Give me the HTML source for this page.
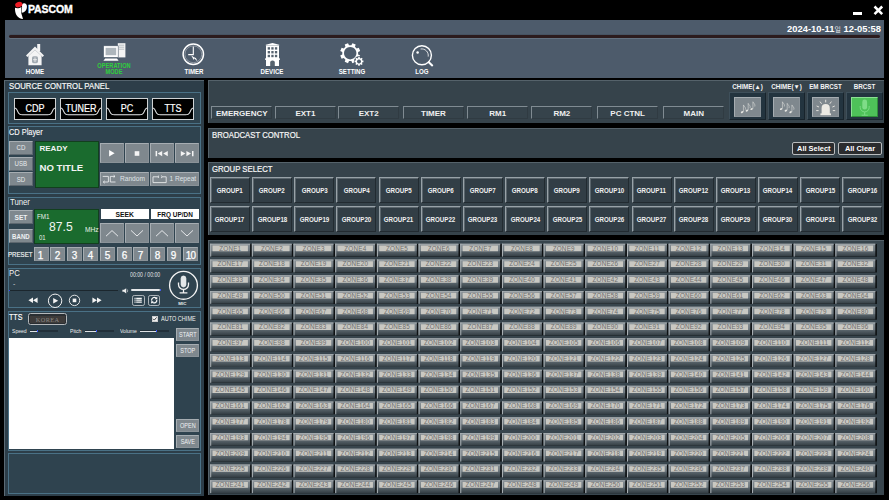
<!DOCTYPE html><html><head><meta charset="utf-8"><title>PASCOM</title><style>
html,body{margin:0;padding:0;background:#000;}
body{width:889px;height:500px;overflow:hidden;position:relative;font-family:"Liberation Sans","NanumGothic",sans-serif;color:#fff;}
div,svg{position:absolute;box-sizing:border-box;}
.b{font-weight:bold}
.sub{background:#2f434f;border:1px solid #4a7186;}
.rp{background:#36434b;border-top:1px solid #55626a;border-left:1px solid #55626a;}
.gb{background:#7f888e;border-top:1px solid #a6adb2;border-left:1px solid #a6adb2;border-right:1px solid #8a9298;border-bottom:1px solid #8a9298;color:#dfe3e6;text-align:center;}
.gb2{border-right-color:#5d676f;border-bottom-color:#5d676f;}
.tab{border-top:1px solid #808b92;border-left:1px solid #808b92;border-right:1px solid #303b42;border-bottom:1px solid #303b42;background:#36434b;}
.grp{background:#323e46;border-top:1px solid #98a2a8;border-left:1px solid #98a2a8;border-right:1px solid #222b31;border-bottom:1px solid #222b31;box-shadow:inset 1px 1px 0 rgba(152,162,168,0.4);color:#f0f0f0;font-weight:bold;font-size:6.5px;text-align:center;}
.zn{background:linear-gradient(#959ca1 0%,#7d868c 14%,#6c767d 48%,#525d64 56%,#303a40 100%);border-top:1px solid #a9afb3;border-left:1px solid #9ea5aa;border-right:1px solid #242c31;border-bottom:1px solid #262e33;}
.zn i{position:absolute;left:1.6px;right:1.8px;top:0.6px;height:5.9px;background:#cdcbc5;color:#8d8d8d;font-style:normal;font-size:6.5px;line-height:6.2px;text-align:center;}
.src{background:#000;border:1px solid #cfd2d4;}
</style></head><body>
<svg style="left:12px;top:0px" width="20" height="20" viewBox="0 0 20 20"><path d="M3 7.8 C4.6 8.6 7.4 8.4 9.5 7 C8.8 9.8 8.9 12.2 9.5 14 C10 15.6 10.6 17.2 11 18.9 C8.6 18.9 6 17.6 4.4 15 C3.2 13 2.9 10.4 3 7.8 Z" fill="#fff"/><path d="M9.9 4.4 C11 3.2 13 3 14 4 C15.6 5.6 15.2 9.4 12.8 11.6 C11.8 12.4 10.6 12.8 9.7 12.8 C9.4 10.8 9.5 9.2 10.1 7.4 Z" fill="#fff"/><ellipse cx="6.8" cy="4.6" rx="3.7" ry="2.6" fill="#ee1c25" transform="rotate(-17 6.8 4.6)"/></svg>
<div style="left:28px;top:3px;font-size:10.5px;line-height:12.5px;white-space:nowrap;font-weight:bold;letter-spacing:-0.1px;-webkit-text-stroke:0.35px #fff;">PASCOM</div>
<div style="left:853px;top:12px;width:9px;height:3px;background:#fff"></div>
<svg style="left:873px;top:5px" width="11" height="11" viewBox="0 0 11 11"><path d="M1.5 1.5 L9.2 9.2 M9.2 1.5 L1.5 9.2" stroke="#fff" stroke-width="2.5" fill="none"/></svg>
<div style="left:5px;top:20px;width:879px;height:58px;background:#4d5b6b;"></div>
<div style="left:9px;top:35.4px;width:871px;height:2.6px;background:#2b1b1d;border-radius:1.5px;box-shadow:0 0.8px 0 #6a7887,0 -0.5px 0 #414d5b;"></div>
<div style="left:780px;top:23px;font-size:9.5px;line-height:11.5px;white-space:nowrap;width:101px;text-align:right;transform:scaleX(0.985);transform-origin:100% 0;font-weight:bold;">2024-10-11<span style="font-size:7px;font-weight:normal">일</span> 12-05:58</div>
<svg style="left:24px;top:42px" width="22" height="25" viewBox="0 0 22 25"><path d="M13.2 2 h3 v7 h-3z" fill="#f4f4f4"/><path d="M11 4.6 L2 13.4 L3.4 14.9 L11 7.8 L18.6 14.9 L20 13.4 Z" fill="#f4f4f4"/><path d="M4.4 14 L11 7.8 L17.6 14 V23.2 H4.4 Z" fill="#f4f4f4"/><rect x="8" y="14.2" width="6" height="7" rx="1.6" fill="#a3abb2"/><path d="M11 15.4 v4.6 M9 17.7 h4" stroke="#f4f4f4" stroke-width="0.8"/></svg>
<div style="left:-5px;top:67.6px;font-size:6.8px;line-height:8.8px;white-space:nowrap;width:80px;text-align:center;transform:scaleX(0.9);transform-origin:50% 0;font-weight:bold;color:#fff;">HOME</div>
<svg style="left:102px;top:41px" width="25" height="21" viewBox="0 0 25 21"><rect x="15.8" y="2.2" width="7.6" height="14.2" fill="#f4f4f4"/><path d="M17 4.2 h5.2 M17 6.2 h5.2 M17 8.2 h5.2" stroke="#a9b1b8" stroke-width="0.8"/><rect x="1.6" y="4.8" width="14.6" height="11.6" fill="#fff" stroke="#4d5b6b" stroke-width="0.6"/><rect x="3.6" y="6.8" width="10.6" height="7.4" fill="#aeb6bc"/><path d="M3.2 17.4 H15 L16.6 19.8 H1.4 Z" fill="#fff"/></svg>
<div style="left:74.3px;top:62.3px;font-size:6.3px;line-height:8.3px;white-space:nowrap;width:80px;text-align:center;transform:scaleX(0.9);transform-origin:50% 0;font-weight:bold;color:#2fd03c;">OPERATION</div>
<div style="left:74.3px;top:68.1px;font-size:6.3px;line-height:8.3px;white-space:nowrap;width:80px;text-align:center;transform:scaleX(0.9);transform-origin:50% 0;font-weight:bold;color:#2fd03c;">MODE</div>
<svg style="left:181px;top:42px" width="25" height="25" viewBox="0 0 25 25"><circle cx="12.3" cy="12.3" r="10.2" fill="none" stroke="#fff" stroke-width="1.5"/><circle cx="12.3" cy="12.3" r="8.4" fill="none" stroke="#c8cdd2" stroke-width="0.5"/><path d="M12.3 4.6 V12.6 H7.2" fill="none" stroke="#fff" stroke-width="1.1"/><path d="M10.2 13.6 L16.6 19.4 L14.9 15.9 L12.8 15.2 Z" fill="#fff"/><path d="M10.2 13.6 L12.8 18 L13.4 15.8 Z" fill="#fff"/></svg>
<div style="left:153.6px;top:67.6px;font-size:6.8px;line-height:8.8px;white-space:nowrap;width:80px;text-align:center;transform:scaleX(0.9);transform-origin:50% 0;font-weight:bold;color:#fff;">TIMER</div>
<svg style="left:264px;top:41px" width="17" height="26" viewBox="0 0 17 26"><path d="M8.5 2 L15.2 3.8 V4.6 H1.8 V3.8 Z" fill="#fff"/><rect x="2" y="4.6" width="13" height="20.4" fill="#fff"/><g fill="#56636f"><rect x="3.7" y="6.2" width="2.3" height="2.4"/><rect x="7.3" y="6.2" width="2.3" height="2.4"/><rect x="10.9" y="6.2" width="2.3" height="2.4"/><rect x="3.7" y="10" width="2.3" height="2.4"/><rect x="7.3" y="10" width="2.3" height="2.4"/><rect x="10.9" y="10" width="2.3" height="2.4"/><rect x="3.7" y="13.8" width="2.3" height="2.4"/><rect x="7.3" y="13.8" width="2.3" height="2.4"/><rect x="10.9" y="13.8" width="2.3" height="2.4"/><path d="M6.2 25 V20.8 Q8.5 18.4 10.8 20.8 V25 Z"/></g><rect x="1" y="17.4" width="15" height="1.4" fill="#fff"/></svg>
<div style="left:232.39999999999998px;top:67.6px;font-size:6.8px;line-height:8.8px;white-space:nowrap;width:80px;text-align:center;transform:scaleX(0.9);transform-origin:50% 0;font-weight:bold;color:#fff;">DEVICE</div>
<svg style="left:340px;top:42.2px" width="26" height="27" viewBox="0 0 26 27"><path d="M18.11 12.39 L20.16 13.40 L18.80 16.69 L16.64 15.95 L14.95 17.64 L15.69 19.80 L12.40 21.16 L11.39 19.11 L9.01 19.11 L8.00 21.16 L4.71 19.80 L5.45 17.64 L3.76 15.95 L1.60 16.69 L0.24 13.40 L2.29 12.39 L2.29 10.01 L0.24 9.00 L1.60 5.71 L3.76 6.45 L5.45 4.76 L4.71 2.60 L8.00 1.24 L9.01 3.29 L11.39 3.29 L12.40 1.24 L15.69 2.60 L14.95 4.76 L16.64 6.45 L18.80 5.71 L20.16 9.00 L18.11 10.01 Z M10.2 5.0 a6.2 6.2 0 1 0 0.01 0 Z" fill="#fff" fill-rule="evenodd"/><circle cx="19.0" cy="19.4" r="5.1" fill="#4d5b6b"/><path d="M22.30 18.58 L23.43 18.62 L23.43 20.18 L22.30 20.22 L21.91 21.15 L22.69 21.98 L21.58 23.09 L20.75 22.31 L19.82 22.70 L19.78 23.83 L18.22 23.83 L18.18 22.70 L17.25 22.31 L16.42 23.09 L15.31 21.98 L16.09 21.15 L15.70 20.22 L14.57 20.18 L14.57 18.62 L15.70 18.58 L16.09 17.65 L15.31 16.82 L16.42 15.71 L17.25 16.49 L18.18 16.10 L18.22 14.97 L19.78 14.97 L19.82 16.10 L20.75 16.49 L21.58 15.71 L22.69 16.82 L21.91 17.65 Z M19.0 17.4 a2.0 2.0 0 1 0 0.01 0 Z" fill="#fff" fill-rule="evenodd"/></svg>
<div style="left:311.5px;top:67.6px;font-size:6.8px;line-height:8.8px;white-space:nowrap;width:80px;text-align:center;transform:scaleX(0.9);transform-origin:50% 0;font-weight:bold;color:#fff;">SETTING</div>
<svg style="left:410px;top:43.7px" width="26" height="25" viewBox="0 0 26 25"><circle cx="11.9" cy="11.3" r="9.5" fill="none" stroke="#fff" stroke-width="1.4"/><path d="M10.6 5 A6.6 6.6 0 0 1 18.2 12.6" fill="none" stroke="#fff" stroke-width="0.8"/><circle cx="7.6" cy="8.5" r="1.25" fill="#fff"/><path d="M18.8 18.2 L22.2 21.4" stroke="#fff" stroke-width="2.1" stroke-linecap="round"/></svg>
<div style="left:381.8px;top:67.6px;font-size:6.8px;line-height:8.8px;white-space:nowrap;width:80px;text-align:center;transform:scaleX(0.9);transform-origin:50% 0;font-weight:bold;color:#fff;">LOG</div>
<div style="left:4px;top:80px;width:199.5px;height:415.5px;background:#2d3e49;border-left:1px solid #5b6a74;border-top:1px solid #55646e;"></div>
<div style="left:9px;top:80.6px;font-size:8.6px;line-height:10.6px;white-space:nowrap;transform:scaleX(0.905);transform-origin:0 0;color:#f6f6f6;-webkit-text-stroke:0.2px #f6f6f6;">SOURCE CONTROL PANEL</div>
<div class="sub" style="left:8px;top:91.5px;width:193px;height:32px;"></div>
<div class="src" style="left:13.8px;top:98.2px;width:42px;height:21.6px;"><svg style="left:0;top:0" width="40" height="19.6" viewBox="0 0 40 19.6"><path d="M0 9 C1.5 9.5 2.2 11 2.8 12.6 C3.6 14.8 5 15.8 7.5 15.8 H32.5 C35 15.8 36.4 14.8 37.2 12.6 C37.8 11 38.5 9.5 40 9" fill="none" stroke="#e6e8ea" stroke-width="1.1"/></svg></div>
<div style="left:13.8px;top:102.8px;font-size:10px;line-height:12px;white-space:nowrap;width:42px;text-align:center;transform:scaleX(0.9);transform-origin:50% 0;color:#fff;-webkit-text-stroke:0.2px #fff;">CDP</div>
<div class="src" style="left:59.900000000000006px;top:98.2px;width:42px;height:21.6px;"><svg style="left:0;top:0" width="40" height="19.6" viewBox="0 0 40 19.6"><path d="M0 9 C1.5 9.5 2.2 11 2.8 12.6 C3.6 14.8 5 15.8 7.5 15.8 H32.5 C35 15.8 36.4 14.8 37.2 12.6 C37.8 11 38.5 9.5 40 9" fill="none" stroke="#e6e8ea" stroke-width="1.1"/></svg></div>
<div style="left:59.900000000000006px;top:102.8px;font-size:10px;line-height:12px;white-space:nowrap;width:42px;text-align:center;transform:scaleX(0.9);transform-origin:50% 0;color:#fff;-webkit-text-stroke:0.2px #fff;">TUNER</div>
<div class="src" style="left:106.0px;top:98.2px;width:42px;height:21.6px;"><svg style="left:0;top:0" width="40" height="19.6" viewBox="0 0 40 19.6"><path d="M0 9 C1.5 9.5 2.2 11 2.8 12.6 C3.6 14.8 5 15.8 7.5 15.8 H32.5 C35 15.8 36.4 14.8 37.2 12.6 C37.8 11 38.5 9.5 40 9" fill="none" stroke="#e6e8ea" stroke-width="1.1"/></svg></div>
<div style="left:106.0px;top:102.8px;font-size:10px;line-height:12px;white-space:nowrap;width:42px;text-align:center;transform:scaleX(0.9);transform-origin:50% 0;color:#fff;-webkit-text-stroke:0.2px #fff;">PC</div>
<div class="src" style="left:152.10000000000002px;top:98.2px;width:42px;height:21.6px;"><svg style="left:0;top:0" width="40" height="19.6" viewBox="0 0 40 19.6"><path d="M0 9 C1.5 9.5 2.2 11 2.8 12.6 C3.6 14.8 5 15.8 7.5 15.8 H32.5 C35 15.8 36.4 14.8 37.2 12.6 C37.8 11 38.5 9.5 40 9" fill="none" stroke="#e6e8ea" stroke-width="1.1"/></svg></div>
<div style="left:152.10000000000002px;top:102.8px;font-size:10px;line-height:12px;white-space:nowrap;width:42px;text-align:center;transform:scaleX(0.9);transform-origin:50% 0;color:#fff;-webkit-text-stroke:0.2px #fff;">TTS</div>
<div class="sub" style="left:8px;top:126px;width:193px;height:68px;"></div>
<div style="left:9.2px;top:126.6px;font-size:8.6px;line-height:10.6px;white-space:nowrap;transform:scaleX(0.86);transform-origin:0 0;color:#f6f6f6;-webkit-text-stroke:0.15px #f6f6f6;">CD Player</div>
<div class="gb gb2" style="left:9px;top:141.2px;width:23.8px;height:13.8px;"></div>
<div style="left:9px;top:144.39999999999998px;font-size:6.8px;line-height:8.8px;white-space:nowrap;width:23.8px;text-align:center;transform:scaleX(0.9);transform-origin:50% 0;color:#e8ebed;">CD</div>
<div class="gb gb2" style="left:9px;top:156.79999999999998px;width:23.8px;height:13.8px;"></div>
<div style="left:9px;top:159.99999999999997px;font-size:6.8px;line-height:8.8px;white-space:nowrap;width:23.8px;text-align:center;transform:scaleX(0.9);transform-origin:50% 0;color:#e8ebed;">USB</div>
<div class="gb gb2" style="left:9px;top:172.39999999999998px;width:23.8px;height:13.8px;"></div>
<div style="left:9px;top:175.59999999999997px;font-size:6.8px;line-height:8.8px;white-space:nowrap;width:23.8px;text-align:center;transform:scaleX(0.9);transform-origin:50% 0;color:#e8ebed;">SD</div>
<div style="left:35px;top:141px;width:64px;height:46.5px;background:#1a6b2e;border:1px solid #123f1e;"></div>
<div style="left:39.5px;top:143.8px;font-size:8px;line-height:10px;white-space:nowrap;font-weight:bold;color:#f4f4f4;">READY</div>
<div style="left:39.5px;top:161.5px;font-size:9.6px;line-height:11.6px;white-space:nowrap;font-weight:bold;color:#f4f4f4;">NO TITLE</div>
<div class="gb" style="left:100px;top:142.6px;width:23.8px;height:20.4px;"></div>
<div class="gb" style="left:125px;top:142.6px;width:23.8px;height:20.4px;"></div>
<div class="gb" style="left:150px;top:142.6px;width:23.8px;height:20.4px;"></div>
<div class="gb" style="left:175.2px;top:142.6px;width:23.8px;height:20.4px;"></div>
<svg style="left:100px;top:142.6px" width="24" height="20.4" viewBox="0 0 24 20.4"><path d="M9.1 7.1 L14.6 10.3 L9.1 13.5 Z" fill="#fff"/></svg>
<svg style="left:125px;top:142.6px" width="24" height="20.4" viewBox="0 0 24 20.4"><rect x="9.7" y="8.2" width="4.6" height="4.6" fill="#f4f4f4"/></svg>
<svg style="left:150px;top:142.6px" width="24" height="20.4" viewBox="0 0 24 20.4"><path d="M5.6 8 h1.5 v5.2 h-1.5z M12.2 8 v5.2 L7.6 10.6z M17.8 8 v5.2 L13.2 10.6z" fill="#f4f4f4"/></svg>
<svg style="left:175.2px;top:142.6px" width="24" height="20.4" viewBox="0 0 24 20.4"><path d="M17 8 h1.5 v5.2 h-1.5z M11.4 8 v5.2 L16 10.6z M5.8 8 v5.2 L10.4 10.6z" fill="#f4f4f4"/></svg>
<div class="gb" style="left:100px;top:172px;width:48.6px;height:14.2px;"></div>
<div class="gb" style="left:150px;top:172px;width:49px;height:14.2px;"></div>
<svg style="left:102px;top:174px" width="14" height="11" viewBox="0 0 14 11"><path d="M0.7 2.4 H6.4 V8 H1.3 M2.7 6.8 L1.3 8 L2.7 9.2 M13.5 8 H8.3 V2.4 H13 M11.6 1.2 L13 2.4 L11.6 3.6" fill="none" stroke="#eceef0" stroke-width="0.85"/></svg>
<div style="left:120px;top:175.4px;font-size:6.6px;line-height:8.6px;white-space:nowrap;color:#dfe3e6;">Random</div>
<svg style="left:152px;top:174px" width="15" height="11" viewBox="0 0 15 11"><path d="M6 2.8 H1 V8.6 H14.2 V2.8 H10.6 M9 1.6 L10.6 2.8 L9 4 M6.4 1.6 v2.4" fill="none" stroke="#eceef0" stroke-width="0.85"/></svg>
<div style="left:169.4px;top:175.4px;font-size:6.6px;line-height:8.6px;white-space:nowrap;color:#dfe3e6;">1 Repeat</div>
<div class="sub" style="left:8px;top:196.5px;width:193px;height:68.5px;"></div>
<div style="left:9.5px;top:197.2px;font-size:8.6px;line-height:10.6px;white-space:nowrap;transform:scaleX(0.9);transform-origin:0 0;color:#f2f2f2;">Tuner</div>
<div class="gb gb2" style="left:9px;top:210.2px;width:23.8px;height:14px;"></div>
<div style="left:9px;top:213.6px;font-size:6.6px;line-height:8.6px;white-space:nowrap;width:23.8px;text-align:center;font-weight:bold;color:#eef0f2;">SET</div>
<div class="gb gb2" style="left:9px;top:229.3px;width:23.8px;height:14px;"></div>
<div style="left:9px;top:232.7px;font-size:6.6px;line-height:8.6px;white-space:nowrap;width:23.8px;text-align:center;transform:scaleX(0.92);transform-origin:50% 0;font-weight:bold;color:#eef0f2;">BAND</div>
<div style="left:34.4px;top:209px;width:64.6px;height:35px;background:#1a6b2e;border:1px solid #123f1e;"></div>
<div style="left:37.2px;top:212.4px;font-size:7px;line-height:9px;white-space:nowrap;transform:scaleX(0.9);transform-origin:0 0;color:#e8f0e8;">FM1</div>
<div style="left:49.4px;top:219.6px;font-size:12.8px;line-height:14.8px;white-space:nowrap;transform:scaleX(0.95);transform-origin:0 0;color:#f2f6f2;">87.5</div>
<div style="left:85px;top:225px;font-size:7px;line-height:9px;white-space:nowrap;transform:scaleX(0.95);transform-origin:0 0;color:#e8f0e8;">MHz</div>
<div style="left:38.6px;top:232.6px;font-size:7px;line-height:9px;white-space:nowrap;transform:scaleX(0.85);transform-origin:0 0;color:#e8f0e8;">01</div>
<div style="left:100.7px;top:209.2px;width:48px;height:9.4px;background:#fff;"></div>
<div style="left:100.7px;top:211px;font-size:6.8px;line-height:8.8px;white-space:nowrap;width:48px;text-align:center;font-weight:bold;color:#111;">SEEK</div>
<div style="left:150.8px;top:209.2px;width:48.2px;height:9.4px;background:#fff;"></div>
<div style="left:150.8px;top:211px;font-size:6.8px;line-height:8.8px;white-space:nowrap;width:48.2px;text-align:center;transform:scaleX(0.95);transform-origin:50% 0;font-weight:bold;color:#111;">FRQ UP/DN</div>
<div class="gb" style="left:100px;top:223.2px;width:23.8px;height:20.2px;"></div>
<svg style="left:100px;top:223.2px" width="24" height="20.2" viewBox="0 0 24 20.2"><path d="M6 13.2 L12 7.6 L18 13.2" fill="none" stroke="#f0f2f4" stroke-width="0.9"/></svg>
<div class="gb" style="left:125px;top:223.2px;width:23.8px;height:20.2px;"></div>
<svg style="left:125px;top:223.2px" width="24" height="20.2" viewBox="0 0 24 20.2"><path d="M6 7.4 L12 13 L18 7.4" fill="none" stroke="#f0f2f4" stroke-width="0.9"/></svg>
<div class="gb" style="left:150px;top:223.2px;width:23.8px;height:20.2px;"></div>
<svg style="left:150px;top:223.2px" width="24" height="20.2" viewBox="0 0 24 20.2"><path d="M6 13.2 L12 7.6 L18 13.2" fill="none" stroke="#f0f2f4" stroke-width="0.9"/></svg>
<div class="gb" style="left:175.2px;top:223.2px;width:23.8px;height:20.2px;"></div>
<svg style="left:175.2px;top:223.2px" width="24" height="20.2" viewBox="0 0 24 20.2"><path d="M6 7.4 L12 13 L18 7.4" fill="none" stroke="#f0f2f4" stroke-width="0.9"/></svg>
<div style="left:7.8px;top:250.2px;font-size:7.4px;line-height:9.4px;white-space:nowrap;transform:scaleX(0.83);transform-origin:0 0;color:#f6f6f6;-webkit-text-stroke:0.15px #f6f6f6;">PRESET</div>
<div class="gb" style="left:33.7px;top:247px;width:14.9px;height:14px;"></div>
<div style="left:33.400000000000006px;top:248.6px;font-size:10.5px;line-height:12.5px;white-space:nowrap;width:14.9px;text-align:center;transform:scaleX(0.95);transform-origin:50% 0;color:#fff;-webkit-text-stroke:0.25px #fff;">1</div>
<div class="gb" style="left:50.2px;top:247px;width:14.9px;height:14px;"></div>
<div style="left:49.900000000000006px;top:248.6px;font-size:10.5px;line-height:12.5px;white-space:nowrap;width:14.9px;text-align:center;transform:scaleX(0.95);transform-origin:50% 0;color:#fff;-webkit-text-stroke:0.25px #fff;">2</div>
<div class="gb" style="left:66.8px;top:247px;width:14.9px;height:14px;"></div>
<div style="left:66.5px;top:248.6px;font-size:10.5px;line-height:12.5px;white-space:nowrap;width:14.9px;text-align:center;transform:scaleX(0.95);transform-origin:50% 0;color:#fff;-webkit-text-stroke:0.25px #fff;">3</div>
<div class="gb" style="left:83.4px;top:247px;width:14.9px;height:14px;"></div>
<div style="left:83.10000000000001px;top:248.6px;font-size:10.5px;line-height:12.5px;white-space:nowrap;width:14.9px;text-align:center;transform:scaleX(0.95);transform-origin:50% 0;color:#fff;-webkit-text-stroke:0.25px #fff;">4</div>
<div class="gb" style="left:100.2px;top:247px;width:14.9px;height:14px;"></div>
<div style="left:99.9px;top:248.6px;font-size:10.5px;line-height:12.5px;white-space:nowrap;width:14.9px;text-align:center;transform:scaleX(0.95);transform-origin:50% 0;color:#fff;-webkit-text-stroke:0.25px #fff;">5</div>
<div class="gb" style="left:116.9px;top:247px;width:14.9px;height:14px;"></div>
<div style="left:116.60000000000001px;top:248.6px;font-size:10.5px;line-height:12.5px;white-space:nowrap;width:14.9px;text-align:center;transform:scaleX(0.95);transform-origin:50% 0;color:#fff;-webkit-text-stroke:0.25px #fff;">6</div>
<div class="gb" style="left:133.3px;top:247px;width:14.9px;height:14px;"></div>
<div style="left:133.0px;top:248.6px;font-size:10.5px;line-height:12.5px;white-space:nowrap;width:14.9px;text-align:center;transform:scaleX(0.95);transform-origin:50% 0;color:#fff;-webkit-text-stroke:0.25px #fff;">7</div>
<div class="gb" style="left:150px;top:247px;width:14.9px;height:14px;"></div>
<div style="left:149.7px;top:248.6px;font-size:10.5px;line-height:12.5px;white-space:nowrap;width:14.9px;text-align:center;transform:scaleX(0.95);transform-origin:50% 0;color:#fff;-webkit-text-stroke:0.25px #fff;">8</div>
<div class="gb" style="left:166.6px;top:247px;width:14.9px;height:14px;"></div>
<div style="left:166.29999999999998px;top:248.6px;font-size:10.5px;line-height:12.5px;white-space:nowrap;width:14.9px;text-align:center;transform:scaleX(0.95);transform-origin:50% 0;color:#fff;-webkit-text-stroke:0.25px #fff;">9</div>
<div class="gb" style="left:183.2px;top:247px;width:14.9px;height:14px;"></div>
<div style="left:182.89999999999998px;top:248.6px;font-size:10.5px;line-height:12.5px;white-space:nowrap;width:14.9px;text-align:center;transform:scaleX(0.95);transform-origin:50% 0;color:#fff;-webkit-text-stroke:0.25px #fff;letter-spacing:-0.8px;">10</div>
<div class="sub" style="left:8px;top:268px;width:193px;height:40px;"></div>
<div style="left:9.3px;top:268.4px;font-size:8.6px;line-height:10.6px;white-space:nowrap;transform:scaleX(0.9);transform-origin:0 0;color:#f2f2f2;">PC</div>
<div style="left:13px;top:278.5px;font-size:7px;line-height:9px;white-space:nowrap;color:#d0d4d8;">-</div>
<div style="left:9px;top:289.8px;width:109.4px;height:1px;background:#1b262d;"></div>
<div style="left:9px;top:289.6px;width:1.4px;height:1.2px;background:#2a3cff;"></div>
<div style="left:129.5px;top:271px;font-size:6.4px;line-height:8.4px;white-space:nowrap;transform:scaleX(0.81);transform-origin:0 0;color:#e6e8ea;">00:00 / 00:00</div>
<svg style="left:28px;top:297px" width="10" height="7" viewBox="0 0 10 7"><path d="M5 0.6 V6 L0.4 3.3z M9.6 0.6 V6 L5 3.3z" fill="#f4f4f4"/></svg>
<svg style="left:91.5px;top:297px" width="10" height="7" viewBox="0 0 10 7"><path d="M0.4 0.6 V6 L5 3.3z M5 0.6 V6 L9.6 3.3z" fill="#f4f4f4"/></svg>
<svg style="left:47px;top:292.5px" width="16" height="16" viewBox="0 0 16 16"><circle cx="8.1" cy="7.8" r="6.7" fill="none" stroke="#f4f4f4" stroke-width="1"/><path d="M6.2 5 L11.2 7.8 L6.2 10.6z" fill="#f4f4f4"/></svg>
<svg style="left:67.5px;top:293.8px" width="13" height="13" viewBox="0 0 13 13"><circle cx="6.5" cy="6.4" r="5.2" fill="none" stroke="#f4f4f4" stroke-width="0.9"/><rect x="4.7" y="4.6" width="3.6" height="3.6" fill="#f4f4f4"/></svg>
<svg style="left:121.5px;top:287.5px" width="8" height="6" viewBox="0 0 8 6"><path d="M0.4 1.8 H2 L4.2 0.2 V5.4 L2 3.8 H0.4z" fill="#f0f0f0"/><path d="M5.2 1.4 Q6.2 2.8 5.2 4.2" stroke="#f0f0f0" stroke-width="0.6" fill="none"/></svg>
<div style="left:130.7px;top:289.3px;width:29.8px;height:1.7px;background:#e6e8ea;border-radius:1px;"></div>
<div style="left:159.7px;top:289.3px;width:0.8px;height:1.7px;background:#4a60e8;"></div>
<div style="left:132.2px;top:295.2px;width:12.4px;height:10.4px;border:1px solid #aeb5ba;border-radius:2.2px;"></div>
<svg style="left:132.2px;top:295.2px" width="12.4" height="10.4" viewBox="0 0 12.4 10.4"><path d="M4.2 3.3 H9.8 M4.2 5.2 H9.8 M4.2 7.1 H9.8" stroke="#f8f8f8" stroke-width="1.25"/><path d="M2.5 3.3 h1.1 M2.5 5.2 h1.1 M2.5 7.1 h1.1" stroke="#f8f8f8" stroke-width="1.25"/></svg>
<div style="left:147.5px;top:295.2px;width:12.4px;height:10.4px;border:1px solid #aeb5ba;border-radius:2.2px;"></div>
<svg style="left:147.5px;top:295.2px" width="12.4" height="10.4" viewBox="0 0 12.4 10.4"><path d="M3.6 5.6 A2.7 2.7 0 0 1 8.2 3.3 M8.8 4.8 A2.7 2.7 0 0 1 4.2 7.1" fill="none" stroke="#f8f8f8" stroke-width="1.25"/><path d="M9.3 1.6 V4.2 H6.7z M3.1 8.8 V6.2 H5.7z" fill="#f8f8f8"/></svg>
<svg style="left:167.5px;top:269.7px" width="31" height="31" viewBox="0 0 31 31"><circle cx="15.5" cy="15.3" r="13.9" fill="none" stroke="#f4f4f4" stroke-width="1.35"/><rect x="13.1" y="6" width="4.8" height="11" rx="2.4" fill="#e4e8ea" stroke="#fff" stroke-width="0.7"/><path d="M10.5 12.4 V14.4 A5 5 0 0 0 20.5 14.4 V12.4" fill="none" stroke="#f4f4f4" stroke-width="1.3"/><path d="M15.5 19.4 V22.4 M11.6 22.8 H19.4" stroke="#f4f4f4" stroke-width="1.3"/></svg>
<div style="left:172.3px;top:301.2px;font-size:4.4px;line-height:6.4px;white-space:nowrap;width:20px;text-align:center;font-weight:bold;color:#eee;">MIC</div>
<div class="sub" style="left:8px;top:311px;width:193px;height:139.5px;"></div>
<div style="left:9.3px;top:312.4px;font-size:8.6px;line-height:10.6px;white-space:nowrap;transform:scaleX(0.83);transform-origin:0 0;color:#fff;-webkit-text-stroke:0.15px #fff;">TTS</div>
<div style="left:27.7px;top:313.2px;width:39.8px;height:11.6px;border:1px solid #b4b8bb;border-radius:2.5px;background:#2a2f33;"></div>
<div style="left:30.2px;top:316.2px;width:34.8px;height:6.4px;background:#3d3b3a;"></div>
<div style="left:27.7px;top:315.6px;font-size:6.3px;line-height:8.3px;white-space:nowrap;width:39.8px;text-align:center;color:#8c8a86;font-family:'Liberation Serif',serif;letter-spacing:0.35px;">KOREA</div>
<div style="left:152px;top:316.2px;width:5.6px;height:5.6px;background:#f2f2f2;border:0.5px solid #cfcfcf;"></div>
<svg style="left:152px;top:316.2px" width="5.6" height="5.6" viewBox="0 0 5.6 5.6"><path d="M1.1 2.8 L2.3 4.1 L4.6 1.4" stroke="#333" stroke-width="0.9" fill="none"/></svg>
<div style="left:160.6px;top:314.4px;font-size:7.4px;line-height:9.4px;white-space:nowrap;transform:scaleX(0.75);transform-origin:0 0;color:#f2f2f2;">AUTO CHIME</div>
<div style="left:12px;top:327.4px;font-size:6.2px;line-height:8.2px;white-space:nowrap;transform:scaleX(0.82);transform-origin:0 0;color:#eceeef;">Speed</div>
<div style="left:30px;top:330.4px;width:27.8px;height:1.6px;background:#22303a;"></div>
<div style="left:30px;top:330.5px;width:7px;height:1.5px;background:#dfe3e6;"></div>
<div style="left:36.6px;top:330.4px;width:1px;height:1.6px;background:#3a55ff;"></div>
<div style="left:70.2px;top:327.4px;font-size:6.2px;line-height:8.2px;white-space:nowrap;transform:scaleX(0.82);transform-origin:0 0;color:#eceeef;">Pitch</div>
<div style="left:85px;top:330.4px;width:29.4px;height:1.6px;background:#22303a;"></div>
<div style="left:85px;top:330.5px;width:11.6px;height:1.5px;background:#dfe3e6;"></div>
<div style="left:96.2px;top:330.4px;width:1px;height:1.6px;background:#3a55ff;"></div>
<div style="left:120.2px;top:327.4px;font-size:6.2px;line-height:8.2px;white-space:nowrap;transform:scaleX(0.82);transform-origin:0 0;color:#eceeef;">Volume</div>
<div style="left:140px;top:330.4px;width:29px;height:1.6px;background:#22303a;"></div>
<div style="left:140px;top:330.5px;width:16px;height:1.5px;background:#dfe3e6;"></div>
<div style="left:155.6px;top:330.4px;width:1px;height:1.6px;background:#3a55ff;"></div>
<div style="left:9px;top:337.6px;width:165px;height:111px;background:#fff;"></div>
<div class="gb" style="left:175.6px;top:327.5px;width:23.6px;height:13.5px;"></div>
<div style="left:175.6px;top:330.5px;font-size:6.5px;line-height:8.5px;white-space:nowrap;width:23.6px;text-align:center;transform:scaleX(0.85);transform-origin:50% 0;color:#eef0f2;">START</div>
<div class="gb" style="left:175.6px;top:343.6px;width:23.6px;height:13.5px;"></div>
<div style="left:175.6px;top:346.6px;font-size:6.5px;line-height:8.5px;white-space:nowrap;width:23.6px;text-align:center;transform:scaleX(0.85);transform-origin:50% 0;color:#eef0f2;">STOP</div>
<div class="gb" style="left:175.6px;top:418.6px;width:23.6px;height:13.5px;"></div>
<div style="left:175.6px;top:421.6px;font-size:6.5px;line-height:8.5px;white-space:nowrap;width:23.6px;text-align:center;transform:scaleX(0.85);transform-origin:50% 0;color:#eef0f2;">OPEN</div>
<div class="gb" style="left:175.6px;top:434.8px;width:23.6px;height:13.5px;"></div>
<div style="left:175.6px;top:437.8px;font-size:6.5px;line-height:8.5px;white-space:nowrap;width:23.6px;text-align:center;transform:scaleX(0.85);transform-origin:50% 0;color:#eef0f2;">SAVE</div>
<div class="sub" style="left:8px;top:453px;width:193px;height:41px;"></div>
<div class="rp" style="left:208px;top:80px;width:676px;height:43.2px;"></div>
<div class="tab" style="left:211.1px;top:106px;width:61.3px;height:12.8px;"></div>
<div style="left:211.1px;top:108.9px;font-size:8px;line-height:10px;white-space:nowrap;width:61.3px;text-align:center;font-weight:bold;color:#f0f0f0;">EMERGENCY</div>
<div class="tab" style="left:274.8px;top:106px;width:61.3px;height:12.8px;"></div>
<div style="left:274.8px;top:108.9px;font-size:8px;line-height:10px;white-space:nowrap;width:61.3px;text-align:center;font-weight:bold;color:#f0f0f0;">EXT1</div>
<div class="tab" style="left:338px;top:106px;width:61.3px;height:12.8px;"></div>
<div style="left:338px;top:108.9px;font-size:8px;line-height:10px;white-space:nowrap;width:61.3px;text-align:center;font-weight:bold;color:#f0f0f0;">EXT2</div>
<div class="tab" style="left:402.8px;top:106px;width:61.3px;height:12.8px;"></div>
<div style="left:402.8px;top:108.9px;font-size:8px;line-height:10px;white-space:nowrap;width:61.3px;text-align:center;font-weight:bold;color:#f0f0f0;">TIMER</div>
<div class="tab" style="left:467px;top:106px;width:61.3px;height:12.8px;"></div>
<div style="left:467px;top:108.9px;font-size:8px;line-height:10px;white-space:nowrap;width:61.3px;text-align:center;font-weight:bold;color:#f0f0f0;">RM1</div>
<div class="tab" style="left:531.2px;top:106px;width:61.3px;height:12.8px;"></div>
<div style="left:531.2px;top:108.9px;font-size:8px;line-height:10px;white-space:nowrap;width:61.3px;text-align:center;font-weight:bold;color:#f0f0f0;">RM2</div>
<div class="tab" style="left:597px;top:106px;width:61.3px;height:12.8px;"></div>
<div style="left:597px;top:108.9px;font-size:8px;line-height:10px;white-space:nowrap;width:61.3px;text-align:center;font-weight:bold;color:#f0f0f0;">PC CTNL</div>
<div class="tab" style="left:663.2px;top:106px;width:61.3px;height:12.8px;"></div>
<div style="left:663.2px;top:108.9px;font-size:8px;line-height:10px;white-space:nowrap;width:61.3px;text-align:center;font-weight:bold;color:#f0f0f0;">MAIN</div>
<div style="left:725.0px;top:83px;font-size:6.6px;line-height:8.6px;white-space:nowrap;width:45px;text-align:center;transform:scaleX(0.95);transform-origin:50% 0;font-weight:bold;color:#f4f4f4;">CHIME(&#9650;)</div>
<div style="left:729.0px;top:91.7px;width:37px;height:28.6px;background:#23343f;border:1px solid #3e4f5a;border-right-color:#18242c;border-bottom-color:#18242c;"></div>
<div class="gb" style="left:733.7px;top:97px;width:27.4px;height:20.4px;"></div>
<div style="left:764.1px;top:83px;font-size:6.6px;line-height:8.6px;white-space:nowrap;width:45px;text-align:center;transform:scaleX(0.95);transform-origin:50% 0;font-weight:bold;color:#f4f4f4;">CHIME(&#9660;)</div>
<div style="left:768.1px;top:91.7px;width:37px;height:28.6px;background:#23343f;border:1px solid #3e4f5a;border-right-color:#18242c;border-bottom-color:#18242c;"></div>
<div class="gb" style="left:772.8000000000001px;top:97px;width:27.4px;height:20.4px;"></div>
<div style="left:803.2px;top:83px;font-size:6.6px;line-height:8.6px;white-space:nowrap;width:45px;text-align:center;transform:scaleX(0.95);transform-origin:50% 0;font-weight:bold;color:#f4f4f4;">EM BRCST</div>
<div style="left:807.2px;top:91.7px;width:37px;height:28.6px;background:#23343f;border:1px solid #3e4f5a;border-right-color:#18242c;border-bottom-color:#18242c;"></div>
<div class="gb" style="left:811.9000000000001px;top:97px;width:27.4px;height:20.4px;"></div>
<div style="left:842.3px;top:83px;font-size:6.6px;line-height:8.6px;white-space:nowrap;width:45px;text-align:center;transform:scaleX(0.95);transform-origin:50% 0;font-weight:bold;color:#f4f4f4;">BRCST</div>
<div style="left:846.3px;top:91.7px;width:37px;height:28.6px;background:#23343f;border:1px solid #3e4f5a;border-right-color:#18242c;border-bottom-color:#18242c;"></div>
<div style="left:851.0px;top:97px;width:27.4px;height:20.4px;background:#4ec159;border-top:1px solid #8be093;border-left:1px solid #8be093;border-right:1px solid #2f8f3a;border-bottom:1px solid #2f8f3a;"></div>
<svg style="left:733.7px;top:96.6px" width="27.4" height="20.8" viewBox="0 0 27.4 20.8"><g transform="translate(1.6,1.6) scale(0.88)"><ellipse cx="7.4" cy="15.4" rx="1.5" ry="1.05" transform="rotate(-25 7.4 15.4)" fill="#e6e6e2"/><path d="M8.9 15.0 V7.200000000000001 C9.600000000000001 9.2 12.0 9.8 11.0 12.600000000000001" fill="none" stroke="#e6e6e2" stroke-width="0.6"/><ellipse cx="12.8" cy="13.6" rx="1.5" ry="1.05" transform="rotate(-25 12.8 13.6)" fill="#e6e6e2"/><path d="M14.3 13.2 V5.4 C15.0 7.3999999999999995 17.4 8.0 16.400000000000002 10.8" fill="none" stroke="#e6e6e2" stroke-width="0.6"/><ellipse cx="18.2" cy="11.8" rx="1.5" ry="1.05" transform="rotate(-25 18.2 11.8)" fill="#e6e6e2"/><path d="M19.7 11.4 V3.6000000000000014 C20.4 5.6000000000000005 22.799999999999997 6.200000000000001 21.8 9.0" fill="none" stroke="#e6e6e2" stroke-width="0.6"/></g></svg>
<svg style="left:772.8px;top:96.6px" width="27.4" height="20.8" viewBox="0 0 27.4 20.8"><g transform="translate(1.6,1.6) scale(0.88)"><ellipse cx="7.4" cy="11.8" rx="1.5" ry="1.05" transform="rotate(-25 7.4 11.8)" fill="#e6e6e2"/><path d="M8.9 11.4 V3.6000000000000014 C9.600000000000001 5.6000000000000005 12.0 6.200000000000001 11.0 9.0" fill="none" stroke="#e6e6e2" stroke-width="0.6"/><ellipse cx="12.8" cy="13.6" rx="1.5" ry="1.05" transform="rotate(-25 12.8 13.6)" fill="#e6e6e2"/><path d="M14.3 13.2 V5.4 C15.0 7.3999999999999995 17.4 8.0 16.400000000000002 10.8" fill="none" stroke="#e6e6e2" stroke-width="0.6"/><ellipse cx="18.2" cy="15.4" rx="1.5" ry="1.05" transform="rotate(-25 18.2 15.4)" fill="#e6e6e2"/><path d="M19.7 15.0 V7.200000000000001 C20.4 9.2 22.799999999999997 9.8 21.8 12.600000000000001" fill="none" stroke="#e6e6e2" stroke-width="0.6"/></g></svg>
<svg style="left:811.9px;top:96.9px" width="27.4" height="20.8" viewBox="0 0 27.4 20.8"><path d="M9.6 17 V11.2 A4.1 4.1 0 0 1 17.8 11.2 V17 Z" fill="#eceae4"/><rect x="8.4" y="16.4" width="10.6" height="1.8" fill="#eceae4"/><path d="M13.7 5.4 V2.8 M9.6 6.8 L8 4.6 M17.8 6.8 L19.4 4.6 M7 10 L4.6 9 M20.4 10 L22.8 9 M6.6 13.6 H4.2 M20.8 13.6 H23.2" stroke="#eceae4" stroke-width="0.9"/></svg>
<svg style="left:851px;top:96.9px" width="27.4" height="20.8" viewBox="0 0 27.4 20.8"><rect x="11.3" y="2.6" width="4.8" height="10" rx="2.4" fill="#7fdc88"/><path d="M9.2 9 V10.4 A4.5 4.5 0 0 0 18.2 10.4 V9" fill="none" stroke="#7fdc88" stroke-width="0.9"/><path d="M13.7 15 V18 M10.6 18.2 H16.8" stroke="#7fdc88" stroke-width="0.9"/></svg>
<div class="rp" style="left:208px;top:128px;width:676px;height:29.5px;"></div>
<div style="left:211.6px;top:130.4px;font-size:8.6px;line-height:10.6px;white-space:nowrap;transform:scaleX(0.9);transform-origin:0 0;color:#f6f6f6;-webkit-text-stroke:0.2px #f6f6f6;">BROADCAST CONTROL</div>
<div style="left:791.5px;top:141.6px;width:43.6px;height:13.8px;background:#2b2c2e;border:1px solid #b9bcbe;border-radius:2px;"></div>
<div style="left:791.5px;top:144px;font-size:8px;line-height:10px;white-space:nowrap;width:43.6px;text-align:center;transform:scaleX(0.93);transform-origin:50% 0;font-weight:bold;color:#fff;">All Select</div>
<div style="left:838.2px;top:141.6px;width:44px;height:13.8px;background:#2b2c2e;border:1px solid #b9bcbe;border-radius:2px;"></div>
<div style="left:838.2px;top:144px;font-size:8px;line-height:10px;white-space:nowrap;width:44px;text-align:center;transform:scaleX(0.93);transform-origin:50% 0;font-weight:bold;color:#fff;">All Clear</div>
<div class="rp" style="left:208px;top:162px;width:676px;height:73px;"></div>
<div style="left:211.8px;top:164.3px;font-size:8.6px;line-height:10.6px;white-space:nowrap;transform:scaleX(0.9);transform-origin:0 0;color:#f6f6f6;-webkit-text-stroke:0.2px #f6f6f6;">GROUP SELECT</div>
<div class="grp" style="left:210.00px;top:177.4px;width:40px;height:25.4px;line-height:26.6px;"><span style="display:inline-block;transform:scaleX(0.95)">GROUP1</span></div>
<div class="grp" style="left:252.15px;top:177.4px;width:40px;height:25.4px;line-height:26.6px;"><span style="display:inline-block;transform:scaleX(0.95)">GROUP2</span></div>
<div class="grp" style="left:294.30px;top:177.4px;width:40px;height:25.4px;line-height:26.6px;"><span style="display:inline-block;transform:scaleX(0.95)">GROUP3</span></div>
<div class="grp" style="left:336.45px;top:177.4px;width:40px;height:25.4px;line-height:26.6px;"><span style="display:inline-block;transform:scaleX(0.95)">GROUP4</span></div>
<div class="grp" style="left:378.60px;top:177.4px;width:40px;height:25.4px;line-height:26.6px;"><span style="display:inline-block;transform:scaleX(0.95)">GROUP5</span></div>
<div class="grp" style="left:420.75px;top:177.4px;width:40px;height:25.4px;line-height:26.6px;"><span style="display:inline-block;transform:scaleX(0.95)">GROUP6</span></div>
<div class="grp" style="left:462.90px;top:177.4px;width:40px;height:25.4px;line-height:26.6px;"><span style="display:inline-block;transform:scaleX(0.95)">GROUP7</span></div>
<div class="grp" style="left:505.05px;top:177.4px;width:40px;height:25.4px;line-height:26.6px;"><span style="display:inline-block;transform:scaleX(0.95)">GROUP8</span></div>
<div class="grp" style="left:547.20px;top:177.4px;width:40px;height:25.4px;line-height:26.6px;"><span style="display:inline-block;transform:scaleX(0.95)">GROUP9</span></div>
<div class="grp" style="left:589.35px;top:177.4px;width:40px;height:25.4px;line-height:26.6px;"><span style="display:inline-block;transform:scaleX(0.95)">GROUP10</span></div>
<div class="grp" style="left:631.50px;top:177.4px;width:40px;height:25.4px;line-height:26.6px;"><span style="display:inline-block;transform:scaleX(0.95)">GROUP11</span></div>
<div class="grp" style="left:673.65px;top:177.4px;width:40px;height:25.4px;line-height:26.6px;"><span style="display:inline-block;transform:scaleX(0.95)">GROUP12</span></div>
<div class="grp" style="left:715.80px;top:177.4px;width:40px;height:25.4px;line-height:26.6px;"><span style="display:inline-block;transform:scaleX(0.95)">GROUP13</span></div>
<div class="grp" style="left:757.95px;top:177.4px;width:40px;height:25.4px;line-height:26.6px;"><span style="display:inline-block;transform:scaleX(0.95)">GROUP14</span></div>
<div class="grp" style="left:800.10px;top:177.4px;width:40px;height:25.4px;line-height:26.6px;"><span style="display:inline-block;transform:scaleX(0.95)">GROUP15</span></div>
<div class="grp" style="left:842.25px;top:177.4px;width:40px;height:25.4px;line-height:26.6px;"><span style="display:inline-block;transform:scaleX(0.95)">GROUP16</span></div>
<div class="grp" style="left:210.00px;top:206.4px;width:40px;height:25.4px;line-height:26.6px;"><span style="display:inline-block;transform:scaleX(0.95)">GROUP17</span></div>
<div class="grp" style="left:252.15px;top:206.4px;width:40px;height:25.4px;line-height:26.6px;"><span style="display:inline-block;transform:scaleX(0.95)">GROUP18</span></div>
<div class="grp" style="left:294.30px;top:206.4px;width:40px;height:25.4px;line-height:26.6px;"><span style="display:inline-block;transform:scaleX(0.95)">GROUP19</span></div>
<div class="grp" style="left:336.45px;top:206.4px;width:40px;height:25.4px;line-height:26.6px;"><span style="display:inline-block;transform:scaleX(0.95)">GROUP20</span></div>
<div class="grp" style="left:378.60px;top:206.4px;width:40px;height:25.4px;line-height:26.6px;"><span style="display:inline-block;transform:scaleX(0.95)">GROUP21</span></div>
<div class="grp" style="left:420.75px;top:206.4px;width:40px;height:25.4px;line-height:26.6px;"><span style="display:inline-block;transform:scaleX(0.95)">GROUP22</span></div>
<div class="grp" style="left:462.90px;top:206.4px;width:40px;height:25.4px;line-height:26.6px;"><span style="display:inline-block;transform:scaleX(0.95)">GROUP23</span></div>
<div class="grp" style="left:505.05px;top:206.4px;width:40px;height:25.4px;line-height:26.6px;"><span style="display:inline-block;transform:scaleX(0.95)">GROUP24</span></div>
<div class="grp" style="left:547.20px;top:206.4px;width:40px;height:25.4px;line-height:26.6px;"><span style="display:inline-block;transform:scaleX(0.95)">GROUP25</span></div>
<div class="grp" style="left:589.35px;top:206.4px;width:40px;height:25.4px;line-height:26.6px;"><span style="display:inline-block;transform:scaleX(0.95)">GROUP26</span></div>
<div class="grp" style="left:631.50px;top:206.4px;width:40px;height:25.4px;line-height:26.6px;"><span style="display:inline-block;transform:scaleX(0.95)">GROUP27</span></div>
<div class="grp" style="left:673.65px;top:206.4px;width:40px;height:25.4px;line-height:26.6px;"><span style="display:inline-block;transform:scaleX(0.95)">GROUP28</span></div>
<div class="grp" style="left:715.80px;top:206.4px;width:40px;height:25.4px;line-height:26.6px;"><span style="display:inline-block;transform:scaleX(0.95)">GROUP29</span></div>
<div class="grp" style="left:757.95px;top:206.4px;width:40px;height:25.4px;line-height:26.6px;"><span style="display:inline-block;transform:scaleX(0.95)">GROUP30</span></div>
<div class="grp" style="left:800.10px;top:206.4px;width:40px;height:25.4px;line-height:26.6px;"><span style="display:inline-block;transform:scaleX(0.95)">GROUP31</span></div>
<div class="grp" style="left:842.25px;top:206.4px;width:40px;height:25.4px;line-height:26.6px;"><span style="display:inline-block;transform:scaleX(0.95)">GROUP32</span></div>
<div class="rp" style="left:208px;top:240px;width:676px;height:255px;background:#38454d;"></div>
<svg style="left:208px;top:240px" width="676" height="255" viewBox="208 240 676 255" font-family="Liberation Sans, sans-serif" font-size="6.3" letter-spacing="0.22" text-anchor="middle" fill="#6e6e6e"><defs><linearGradient id="zg" x1="0" y1="0" x2="0" y2="1"><stop offset="0" stop-color="#8f979c"/><stop offset="0.15" stop-color="#7f888e"/><stop offset="0.54" stop-color="#6e787f"/><stop offset="0.6" stop-color="#59646b"/><stop offset="1" stop-color="#333d43"/></linearGradient></defs><path fill="#0d1012" d="M211.20 244.05h40.5v12.6h-40.5zM252.88 244.05h40.5v12.6h-40.5zM294.56 244.05h40.5v12.6h-40.5zM336.24 244.05h40.5v12.6h-40.5zM377.92 244.05h40.5v12.6h-40.5zM419.60 244.05h40.5v12.6h-40.5zM461.28 244.05h40.5v12.6h-40.5zM502.96 244.05h40.5v12.6h-40.5zM544.64 244.05h40.5v12.6h-40.5zM586.32 244.05h40.5v12.6h-40.5zM628.00 244.05h40.5v12.6h-40.5zM669.68 244.05h40.5v12.6h-40.5zM711.36 244.05h40.5v12.6h-40.5zM753.04 244.05h40.5v12.6h-40.5zM794.72 244.05h40.5v12.6h-40.5zM836.40 244.05h40.5v12.6h-40.5zM211.20 259.81h40.5v12.6h-40.5zM252.88 259.81h40.5v12.6h-40.5zM294.56 259.81h40.5v12.6h-40.5zM336.24 259.81h40.5v12.6h-40.5zM377.92 259.81h40.5v12.6h-40.5zM419.60 259.81h40.5v12.6h-40.5zM461.28 259.81h40.5v12.6h-40.5zM502.96 259.81h40.5v12.6h-40.5zM544.64 259.81h40.5v12.6h-40.5zM586.32 259.81h40.5v12.6h-40.5zM628.00 259.81h40.5v12.6h-40.5zM669.68 259.81h40.5v12.6h-40.5zM711.36 259.81h40.5v12.6h-40.5zM753.04 259.81h40.5v12.6h-40.5zM794.72 259.81h40.5v12.6h-40.5zM836.40 259.81h40.5v12.6h-40.5zM211.20 275.58h40.5v12.6h-40.5zM252.88 275.58h40.5v12.6h-40.5zM294.56 275.58h40.5v12.6h-40.5zM336.24 275.58h40.5v12.6h-40.5zM377.92 275.58h40.5v12.6h-40.5zM419.60 275.58h40.5v12.6h-40.5zM461.28 275.58h40.5v12.6h-40.5zM502.96 275.58h40.5v12.6h-40.5zM544.64 275.58h40.5v12.6h-40.5zM586.32 275.58h40.5v12.6h-40.5zM628.00 275.58h40.5v12.6h-40.5zM669.68 275.58h40.5v12.6h-40.5zM711.36 275.58h40.5v12.6h-40.5zM753.04 275.58h40.5v12.6h-40.5zM794.72 275.58h40.5v12.6h-40.5zM836.40 275.58h40.5v12.6h-40.5zM211.20 291.35h40.5v12.6h-40.5zM252.88 291.35h40.5v12.6h-40.5zM294.56 291.35h40.5v12.6h-40.5zM336.24 291.35h40.5v12.6h-40.5zM377.92 291.35h40.5v12.6h-40.5zM419.60 291.35h40.5v12.6h-40.5zM461.28 291.35h40.5v12.6h-40.5zM502.96 291.35h40.5v12.6h-40.5zM544.64 291.35h40.5v12.6h-40.5zM586.32 291.35h40.5v12.6h-40.5zM628.00 291.35h40.5v12.6h-40.5zM669.68 291.35h40.5v12.6h-40.5zM711.36 291.35h40.5v12.6h-40.5zM753.04 291.35h40.5v12.6h-40.5zM794.72 291.35h40.5v12.6h-40.5zM836.40 291.35h40.5v12.6h-40.5zM211.20 307.11h40.5v12.6h-40.5zM252.88 307.11h40.5v12.6h-40.5zM294.56 307.11h40.5v12.6h-40.5zM336.24 307.11h40.5v12.6h-40.5zM377.92 307.11h40.5v12.6h-40.5zM419.60 307.11h40.5v12.6h-40.5zM461.28 307.11h40.5v12.6h-40.5zM502.96 307.11h40.5v12.6h-40.5zM544.64 307.11h40.5v12.6h-40.5zM586.32 307.11h40.5v12.6h-40.5zM628.00 307.11h40.5v12.6h-40.5zM669.68 307.11h40.5v12.6h-40.5zM711.36 307.11h40.5v12.6h-40.5zM753.04 307.11h40.5v12.6h-40.5zM794.72 307.11h40.5v12.6h-40.5zM836.40 307.11h40.5v12.6h-40.5zM211.20 322.88h40.5v12.6h-40.5zM252.88 322.88h40.5v12.6h-40.5zM294.56 322.88h40.5v12.6h-40.5zM336.24 322.88h40.5v12.6h-40.5zM377.92 322.88h40.5v12.6h-40.5zM419.60 322.88h40.5v12.6h-40.5zM461.28 322.88h40.5v12.6h-40.5zM502.96 322.88h40.5v12.6h-40.5zM544.64 322.88h40.5v12.6h-40.5zM586.32 322.88h40.5v12.6h-40.5zM628.00 322.88h40.5v12.6h-40.5zM669.68 322.88h40.5v12.6h-40.5zM711.36 322.88h40.5v12.6h-40.5zM753.04 322.88h40.5v12.6h-40.5zM794.72 322.88h40.5v12.6h-40.5zM836.40 322.88h40.5v12.6h-40.5zM211.20 338.64h40.5v12.6h-40.5zM252.88 338.64h40.5v12.6h-40.5zM294.56 338.64h40.5v12.6h-40.5zM336.24 338.64h40.5v12.6h-40.5zM377.92 338.64h40.5v12.6h-40.5zM419.60 338.64h40.5v12.6h-40.5zM461.28 338.64h40.5v12.6h-40.5zM502.96 338.64h40.5v12.6h-40.5zM544.64 338.64h40.5v12.6h-40.5zM586.32 338.64h40.5v12.6h-40.5zM628.00 338.64h40.5v12.6h-40.5zM669.68 338.64h40.5v12.6h-40.5zM711.36 338.64h40.5v12.6h-40.5zM753.04 338.64h40.5v12.6h-40.5zM794.72 338.64h40.5v12.6h-40.5zM836.40 338.64h40.5v12.6h-40.5zM211.20 354.41h40.5v12.6h-40.5zM252.88 354.41h40.5v12.6h-40.5zM294.56 354.41h40.5v12.6h-40.5zM336.24 354.41h40.5v12.6h-40.5zM377.92 354.41h40.5v12.6h-40.5zM419.60 354.41h40.5v12.6h-40.5zM461.28 354.41h40.5v12.6h-40.5zM502.96 354.41h40.5v12.6h-40.5zM544.64 354.41h40.5v12.6h-40.5zM586.32 354.41h40.5v12.6h-40.5zM628.00 354.41h40.5v12.6h-40.5zM669.68 354.41h40.5v12.6h-40.5zM711.36 354.41h40.5v12.6h-40.5zM753.04 354.41h40.5v12.6h-40.5zM794.72 354.41h40.5v12.6h-40.5zM836.40 354.41h40.5v12.6h-40.5zM211.20 370.17h40.5v12.6h-40.5zM252.88 370.17h40.5v12.6h-40.5zM294.56 370.17h40.5v12.6h-40.5zM336.24 370.17h40.5v12.6h-40.5zM377.92 370.17h40.5v12.6h-40.5zM419.60 370.17h40.5v12.6h-40.5zM461.28 370.17h40.5v12.6h-40.5zM502.96 370.17h40.5v12.6h-40.5zM544.64 370.17h40.5v12.6h-40.5zM586.32 370.17h40.5v12.6h-40.5zM628.00 370.17h40.5v12.6h-40.5zM669.68 370.17h40.5v12.6h-40.5zM711.36 370.17h40.5v12.6h-40.5zM753.04 370.17h40.5v12.6h-40.5zM794.72 370.17h40.5v12.6h-40.5zM836.40 370.17h40.5v12.6h-40.5zM211.20 385.94h40.5v12.6h-40.5zM252.88 385.94h40.5v12.6h-40.5zM294.56 385.94h40.5v12.6h-40.5zM336.24 385.94h40.5v12.6h-40.5zM377.92 385.94h40.5v12.6h-40.5zM419.60 385.94h40.5v12.6h-40.5zM461.28 385.94h40.5v12.6h-40.5zM502.96 385.94h40.5v12.6h-40.5zM544.64 385.94h40.5v12.6h-40.5zM586.32 385.94h40.5v12.6h-40.5zM628.00 385.94h40.5v12.6h-40.5zM669.68 385.94h40.5v12.6h-40.5zM711.36 385.94h40.5v12.6h-40.5zM753.04 385.94h40.5v12.6h-40.5zM794.72 385.94h40.5v12.6h-40.5zM836.40 385.94h40.5v12.6h-40.5zM211.20 401.70h40.5v12.6h-40.5zM252.88 401.70h40.5v12.6h-40.5zM294.56 401.70h40.5v12.6h-40.5zM336.24 401.70h40.5v12.6h-40.5zM377.92 401.70h40.5v12.6h-40.5zM419.60 401.70h40.5v12.6h-40.5zM461.28 401.70h40.5v12.6h-40.5zM502.96 401.70h40.5v12.6h-40.5zM544.64 401.70h40.5v12.6h-40.5zM586.32 401.70h40.5v12.6h-40.5zM628.00 401.70h40.5v12.6h-40.5zM669.68 401.70h40.5v12.6h-40.5zM711.36 401.70h40.5v12.6h-40.5zM753.04 401.70h40.5v12.6h-40.5zM794.72 401.70h40.5v12.6h-40.5zM836.40 401.70h40.5v12.6h-40.5zM211.20 417.47h40.5v12.6h-40.5zM252.88 417.47h40.5v12.6h-40.5zM294.56 417.47h40.5v12.6h-40.5zM336.24 417.47h40.5v12.6h-40.5zM377.92 417.47h40.5v12.6h-40.5zM419.60 417.47h40.5v12.6h-40.5zM461.28 417.47h40.5v12.6h-40.5zM502.96 417.47h40.5v12.6h-40.5zM544.64 417.47h40.5v12.6h-40.5zM586.32 417.47h40.5v12.6h-40.5zM628.00 417.47h40.5v12.6h-40.5zM669.68 417.47h40.5v12.6h-40.5zM711.36 417.47h40.5v12.6h-40.5zM753.04 417.47h40.5v12.6h-40.5zM794.72 417.47h40.5v12.6h-40.5zM836.40 417.47h40.5v12.6h-40.5zM211.20 433.23h40.5v12.6h-40.5zM252.88 433.23h40.5v12.6h-40.5zM294.56 433.23h40.5v12.6h-40.5zM336.24 433.23h40.5v12.6h-40.5zM377.92 433.23h40.5v12.6h-40.5zM419.60 433.23h40.5v12.6h-40.5zM461.28 433.23h40.5v12.6h-40.5zM502.96 433.23h40.5v12.6h-40.5zM544.64 433.23h40.5v12.6h-40.5zM586.32 433.23h40.5v12.6h-40.5zM628.00 433.23h40.5v12.6h-40.5zM669.68 433.23h40.5v12.6h-40.5zM711.36 433.23h40.5v12.6h-40.5zM753.04 433.23h40.5v12.6h-40.5zM794.72 433.23h40.5v12.6h-40.5zM836.40 433.23h40.5v12.6h-40.5zM211.20 449.00h40.5v12.6h-40.5zM252.88 449.00h40.5v12.6h-40.5zM294.56 449.00h40.5v12.6h-40.5zM336.24 449.00h40.5v12.6h-40.5zM377.92 449.00h40.5v12.6h-40.5zM419.60 449.00h40.5v12.6h-40.5zM461.28 449.00h40.5v12.6h-40.5zM502.96 449.00h40.5v12.6h-40.5zM544.64 449.00h40.5v12.6h-40.5zM586.32 449.00h40.5v12.6h-40.5zM628.00 449.00h40.5v12.6h-40.5zM669.68 449.00h40.5v12.6h-40.5zM711.36 449.00h40.5v12.6h-40.5zM753.04 449.00h40.5v12.6h-40.5zM794.72 449.00h40.5v12.6h-40.5zM836.40 449.00h40.5v12.6h-40.5zM211.20 464.76h40.5v12.6h-40.5zM252.88 464.76h40.5v12.6h-40.5zM294.56 464.76h40.5v12.6h-40.5zM336.24 464.76h40.5v12.6h-40.5zM377.92 464.76h40.5v12.6h-40.5zM419.60 464.76h40.5v12.6h-40.5zM461.28 464.76h40.5v12.6h-40.5zM502.96 464.76h40.5v12.6h-40.5zM544.64 464.76h40.5v12.6h-40.5zM586.32 464.76h40.5v12.6h-40.5zM628.00 464.76h40.5v12.6h-40.5zM669.68 464.76h40.5v12.6h-40.5zM711.36 464.76h40.5v12.6h-40.5zM753.04 464.76h40.5v12.6h-40.5zM794.72 464.76h40.5v12.6h-40.5zM836.40 464.76h40.5v12.6h-40.5zM211.20 480.53h40.5v12.6h-40.5zM252.88 480.53h40.5v12.6h-40.5zM294.56 480.53h40.5v12.6h-40.5zM336.24 480.53h40.5v12.6h-40.5zM377.92 480.53h40.5v12.6h-40.5zM419.60 480.53h40.5v12.6h-40.5zM461.28 480.53h40.5v12.6h-40.5zM502.96 480.53h40.5v12.6h-40.5zM544.64 480.53h40.5v12.6h-40.5zM586.32 480.53h40.5v12.6h-40.5zM628.00 480.53h40.5v12.6h-40.5zM669.68 480.53h40.5v12.6h-40.5zM711.36 480.53h40.5v12.6h-40.5zM753.04 480.53h40.5v12.6h-40.5zM794.72 480.53h40.5v12.6h-40.5zM836.40 480.53h40.5v12.6h-40.5z"/><path fill="url(#zg)" d="M210.20 243.75h39.9v12.8h-39.9zM251.88 243.75h39.9v12.8h-39.9zM293.56 243.75h39.9v12.8h-39.9zM335.24 243.75h39.9v12.8h-39.9zM376.92 243.75h39.9v12.8h-39.9zM418.60 243.75h39.9v12.8h-39.9zM460.28 243.75h39.9v12.8h-39.9zM501.96 243.75h39.9v12.8h-39.9zM543.64 243.75h39.9v12.8h-39.9zM585.32 243.75h39.9v12.8h-39.9zM627.00 243.75h39.9v12.8h-39.9zM668.68 243.75h39.9v12.8h-39.9zM710.36 243.75h39.9v12.8h-39.9zM752.04 243.75h39.9v12.8h-39.9zM793.72 243.75h39.9v12.8h-39.9zM835.40 243.75h39.9v12.8h-39.9z"/><path fill="url(#zg)" d="M210.20 259.51h39.9v12.8h-39.9zM251.88 259.51h39.9v12.8h-39.9zM293.56 259.51h39.9v12.8h-39.9zM335.24 259.51h39.9v12.8h-39.9zM376.92 259.51h39.9v12.8h-39.9zM418.60 259.51h39.9v12.8h-39.9zM460.28 259.51h39.9v12.8h-39.9zM501.96 259.51h39.9v12.8h-39.9zM543.64 259.51h39.9v12.8h-39.9zM585.32 259.51h39.9v12.8h-39.9zM627.00 259.51h39.9v12.8h-39.9zM668.68 259.51h39.9v12.8h-39.9zM710.36 259.51h39.9v12.8h-39.9zM752.04 259.51h39.9v12.8h-39.9zM793.72 259.51h39.9v12.8h-39.9zM835.40 259.51h39.9v12.8h-39.9z"/><path fill="url(#zg)" d="M210.20 275.28h39.9v12.8h-39.9zM251.88 275.28h39.9v12.8h-39.9zM293.56 275.28h39.9v12.8h-39.9zM335.24 275.28h39.9v12.8h-39.9zM376.92 275.28h39.9v12.8h-39.9zM418.60 275.28h39.9v12.8h-39.9zM460.28 275.28h39.9v12.8h-39.9zM501.96 275.28h39.9v12.8h-39.9zM543.64 275.28h39.9v12.8h-39.9zM585.32 275.28h39.9v12.8h-39.9zM627.00 275.28h39.9v12.8h-39.9zM668.68 275.28h39.9v12.8h-39.9zM710.36 275.28h39.9v12.8h-39.9zM752.04 275.28h39.9v12.8h-39.9zM793.72 275.28h39.9v12.8h-39.9zM835.40 275.28h39.9v12.8h-39.9z"/><path fill="url(#zg)" d="M210.20 291.05h39.9v12.8h-39.9zM251.88 291.05h39.9v12.8h-39.9zM293.56 291.05h39.9v12.8h-39.9zM335.24 291.05h39.9v12.8h-39.9zM376.92 291.05h39.9v12.8h-39.9zM418.60 291.05h39.9v12.8h-39.9zM460.28 291.05h39.9v12.8h-39.9zM501.96 291.05h39.9v12.8h-39.9zM543.64 291.05h39.9v12.8h-39.9zM585.32 291.05h39.9v12.8h-39.9zM627.00 291.05h39.9v12.8h-39.9zM668.68 291.05h39.9v12.8h-39.9zM710.36 291.05h39.9v12.8h-39.9zM752.04 291.05h39.9v12.8h-39.9zM793.72 291.05h39.9v12.8h-39.9zM835.40 291.05h39.9v12.8h-39.9z"/><path fill="url(#zg)" d="M210.20 306.81h39.9v12.8h-39.9zM251.88 306.81h39.9v12.8h-39.9zM293.56 306.81h39.9v12.8h-39.9zM335.24 306.81h39.9v12.8h-39.9zM376.92 306.81h39.9v12.8h-39.9zM418.60 306.81h39.9v12.8h-39.9zM460.28 306.81h39.9v12.8h-39.9zM501.96 306.81h39.9v12.8h-39.9zM543.64 306.81h39.9v12.8h-39.9zM585.32 306.81h39.9v12.8h-39.9zM627.00 306.81h39.9v12.8h-39.9zM668.68 306.81h39.9v12.8h-39.9zM710.36 306.81h39.9v12.8h-39.9zM752.04 306.81h39.9v12.8h-39.9zM793.72 306.81h39.9v12.8h-39.9zM835.40 306.81h39.9v12.8h-39.9z"/><path fill="url(#zg)" d="M210.20 322.57h39.9v12.8h-39.9zM251.88 322.57h39.9v12.8h-39.9zM293.56 322.57h39.9v12.8h-39.9zM335.24 322.57h39.9v12.8h-39.9zM376.92 322.57h39.9v12.8h-39.9zM418.60 322.57h39.9v12.8h-39.9zM460.28 322.57h39.9v12.8h-39.9zM501.96 322.57h39.9v12.8h-39.9zM543.64 322.57h39.9v12.8h-39.9zM585.32 322.57h39.9v12.8h-39.9zM627.00 322.57h39.9v12.8h-39.9zM668.68 322.57h39.9v12.8h-39.9zM710.36 322.57h39.9v12.8h-39.9zM752.04 322.57h39.9v12.8h-39.9zM793.72 322.57h39.9v12.8h-39.9zM835.40 322.57h39.9v12.8h-39.9z"/><path fill="url(#zg)" d="M210.20 338.34h39.9v12.8h-39.9zM251.88 338.34h39.9v12.8h-39.9zM293.56 338.34h39.9v12.8h-39.9zM335.24 338.34h39.9v12.8h-39.9zM376.92 338.34h39.9v12.8h-39.9zM418.60 338.34h39.9v12.8h-39.9zM460.28 338.34h39.9v12.8h-39.9zM501.96 338.34h39.9v12.8h-39.9zM543.64 338.34h39.9v12.8h-39.9zM585.32 338.34h39.9v12.8h-39.9zM627.00 338.34h39.9v12.8h-39.9zM668.68 338.34h39.9v12.8h-39.9zM710.36 338.34h39.9v12.8h-39.9zM752.04 338.34h39.9v12.8h-39.9zM793.72 338.34h39.9v12.8h-39.9zM835.40 338.34h39.9v12.8h-39.9z"/><path fill="url(#zg)" d="M210.20 354.11h39.9v12.8h-39.9zM251.88 354.11h39.9v12.8h-39.9zM293.56 354.11h39.9v12.8h-39.9zM335.24 354.11h39.9v12.8h-39.9zM376.92 354.11h39.9v12.8h-39.9zM418.60 354.11h39.9v12.8h-39.9zM460.28 354.11h39.9v12.8h-39.9zM501.96 354.11h39.9v12.8h-39.9zM543.64 354.11h39.9v12.8h-39.9zM585.32 354.11h39.9v12.8h-39.9zM627.00 354.11h39.9v12.8h-39.9zM668.68 354.11h39.9v12.8h-39.9zM710.36 354.11h39.9v12.8h-39.9zM752.04 354.11h39.9v12.8h-39.9zM793.72 354.11h39.9v12.8h-39.9zM835.40 354.11h39.9v12.8h-39.9z"/><path fill="url(#zg)" d="M210.20 369.87h39.9v12.8h-39.9zM251.88 369.87h39.9v12.8h-39.9zM293.56 369.87h39.9v12.8h-39.9zM335.24 369.87h39.9v12.8h-39.9zM376.92 369.87h39.9v12.8h-39.9zM418.60 369.87h39.9v12.8h-39.9zM460.28 369.87h39.9v12.8h-39.9zM501.96 369.87h39.9v12.8h-39.9zM543.64 369.87h39.9v12.8h-39.9zM585.32 369.87h39.9v12.8h-39.9zM627.00 369.87h39.9v12.8h-39.9zM668.68 369.87h39.9v12.8h-39.9zM710.36 369.87h39.9v12.8h-39.9zM752.04 369.87h39.9v12.8h-39.9zM793.72 369.87h39.9v12.8h-39.9zM835.40 369.87h39.9v12.8h-39.9z"/><path fill="url(#zg)" d="M210.20 385.63h39.9v12.8h-39.9zM251.88 385.63h39.9v12.8h-39.9zM293.56 385.63h39.9v12.8h-39.9zM335.24 385.63h39.9v12.8h-39.9zM376.92 385.63h39.9v12.8h-39.9zM418.60 385.63h39.9v12.8h-39.9zM460.28 385.63h39.9v12.8h-39.9zM501.96 385.63h39.9v12.8h-39.9zM543.64 385.63h39.9v12.8h-39.9zM585.32 385.63h39.9v12.8h-39.9zM627.00 385.63h39.9v12.8h-39.9zM668.68 385.63h39.9v12.8h-39.9zM710.36 385.63h39.9v12.8h-39.9zM752.04 385.63h39.9v12.8h-39.9zM793.72 385.63h39.9v12.8h-39.9zM835.40 385.63h39.9v12.8h-39.9z"/><path fill="url(#zg)" d="M210.20 401.40h39.9v12.8h-39.9zM251.88 401.40h39.9v12.8h-39.9zM293.56 401.40h39.9v12.8h-39.9zM335.24 401.40h39.9v12.8h-39.9zM376.92 401.40h39.9v12.8h-39.9zM418.60 401.40h39.9v12.8h-39.9zM460.28 401.40h39.9v12.8h-39.9zM501.96 401.40h39.9v12.8h-39.9zM543.64 401.40h39.9v12.8h-39.9zM585.32 401.40h39.9v12.8h-39.9zM627.00 401.40h39.9v12.8h-39.9zM668.68 401.40h39.9v12.8h-39.9zM710.36 401.40h39.9v12.8h-39.9zM752.04 401.40h39.9v12.8h-39.9zM793.72 401.40h39.9v12.8h-39.9zM835.40 401.40h39.9v12.8h-39.9z"/><path fill="url(#zg)" d="M210.20 417.17h39.9v12.8h-39.9zM251.88 417.17h39.9v12.8h-39.9zM293.56 417.17h39.9v12.8h-39.9zM335.24 417.17h39.9v12.8h-39.9zM376.92 417.17h39.9v12.8h-39.9zM418.60 417.17h39.9v12.8h-39.9zM460.28 417.17h39.9v12.8h-39.9zM501.96 417.17h39.9v12.8h-39.9zM543.64 417.17h39.9v12.8h-39.9zM585.32 417.17h39.9v12.8h-39.9zM627.00 417.17h39.9v12.8h-39.9zM668.68 417.17h39.9v12.8h-39.9zM710.36 417.17h39.9v12.8h-39.9zM752.04 417.17h39.9v12.8h-39.9zM793.72 417.17h39.9v12.8h-39.9zM835.40 417.17h39.9v12.8h-39.9z"/><path fill="url(#zg)" d="M210.20 432.93h39.9v12.8h-39.9zM251.88 432.93h39.9v12.8h-39.9zM293.56 432.93h39.9v12.8h-39.9zM335.24 432.93h39.9v12.8h-39.9zM376.92 432.93h39.9v12.8h-39.9zM418.60 432.93h39.9v12.8h-39.9zM460.28 432.93h39.9v12.8h-39.9zM501.96 432.93h39.9v12.8h-39.9zM543.64 432.93h39.9v12.8h-39.9zM585.32 432.93h39.9v12.8h-39.9zM627.00 432.93h39.9v12.8h-39.9zM668.68 432.93h39.9v12.8h-39.9zM710.36 432.93h39.9v12.8h-39.9zM752.04 432.93h39.9v12.8h-39.9zM793.72 432.93h39.9v12.8h-39.9zM835.40 432.93h39.9v12.8h-39.9z"/><path fill="url(#zg)" d="M210.20 448.69h39.9v12.8h-39.9zM251.88 448.69h39.9v12.8h-39.9zM293.56 448.69h39.9v12.8h-39.9zM335.24 448.69h39.9v12.8h-39.9zM376.92 448.69h39.9v12.8h-39.9zM418.60 448.69h39.9v12.8h-39.9zM460.28 448.69h39.9v12.8h-39.9zM501.96 448.69h39.9v12.8h-39.9zM543.64 448.69h39.9v12.8h-39.9zM585.32 448.69h39.9v12.8h-39.9zM627.00 448.69h39.9v12.8h-39.9zM668.68 448.69h39.9v12.8h-39.9zM710.36 448.69h39.9v12.8h-39.9zM752.04 448.69h39.9v12.8h-39.9zM793.72 448.69h39.9v12.8h-39.9zM835.40 448.69h39.9v12.8h-39.9z"/><path fill="url(#zg)" d="M210.20 464.46h39.9v12.8h-39.9zM251.88 464.46h39.9v12.8h-39.9zM293.56 464.46h39.9v12.8h-39.9zM335.24 464.46h39.9v12.8h-39.9zM376.92 464.46h39.9v12.8h-39.9zM418.60 464.46h39.9v12.8h-39.9zM460.28 464.46h39.9v12.8h-39.9zM501.96 464.46h39.9v12.8h-39.9zM543.64 464.46h39.9v12.8h-39.9zM585.32 464.46h39.9v12.8h-39.9zM627.00 464.46h39.9v12.8h-39.9zM668.68 464.46h39.9v12.8h-39.9zM710.36 464.46h39.9v12.8h-39.9zM752.04 464.46h39.9v12.8h-39.9zM793.72 464.46h39.9v12.8h-39.9zM835.40 464.46h39.9v12.8h-39.9z"/><path fill="url(#zg)" d="M210.20 480.23h39.9v12.8h-39.9zM251.88 480.23h39.9v12.8h-39.9zM293.56 480.23h39.9v12.8h-39.9zM335.24 480.23h39.9v12.8h-39.9zM376.92 480.23h39.9v12.8h-39.9zM418.60 480.23h39.9v12.8h-39.9zM460.28 480.23h39.9v12.8h-39.9zM501.96 480.23h39.9v12.8h-39.9zM543.64 480.23h39.9v12.8h-39.9zM585.32 480.23h39.9v12.8h-39.9zM627.00 480.23h39.9v12.8h-39.9zM668.68 480.23h39.9v12.8h-39.9zM710.36 480.23h39.9v12.8h-39.9zM752.04 480.23h39.9v12.8h-39.9zM793.72 480.23h39.9v12.8h-39.9zM835.40 480.23h39.9v12.8h-39.9z"/><path fill="#a2a9ad" d="M210.20 243.75h39.9v1h-39.9zM251.88 243.75h39.9v1h-39.9zM293.56 243.75h39.9v1h-39.9zM335.24 243.75h39.9v1h-39.9zM376.92 243.75h39.9v1h-39.9zM418.60 243.75h39.9v1h-39.9zM460.28 243.75h39.9v1h-39.9zM501.96 243.75h39.9v1h-39.9zM543.64 243.75h39.9v1h-39.9zM585.32 243.75h39.9v1h-39.9zM627.00 243.75h39.9v1h-39.9zM668.68 243.75h39.9v1h-39.9zM710.36 243.75h39.9v1h-39.9zM752.04 243.75h39.9v1h-39.9zM793.72 243.75h39.9v1h-39.9zM835.40 243.75h39.9v1h-39.9zM210.20 259.51h39.9v1h-39.9zM251.88 259.51h39.9v1h-39.9zM293.56 259.51h39.9v1h-39.9zM335.24 259.51h39.9v1h-39.9zM376.92 259.51h39.9v1h-39.9zM418.60 259.51h39.9v1h-39.9zM460.28 259.51h39.9v1h-39.9zM501.96 259.51h39.9v1h-39.9zM543.64 259.51h39.9v1h-39.9zM585.32 259.51h39.9v1h-39.9zM627.00 259.51h39.9v1h-39.9zM668.68 259.51h39.9v1h-39.9zM710.36 259.51h39.9v1h-39.9zM752.04 259.51h39.9v1h-39.9zM793.72 259.51h39.9v1h-39.9zM835.40 259.51h39.9v1h-39.9zM210.20 275.28h39.9v1h-39.9zM251.88 275.28h39.9v1h-39.9zM293.56 275.28h39.9v1h-39.9zM335.24 275.28h39.9v1h-39.9zM376.92 275.28h39.9v1h-39.9zM418.60 275.28h39.9v1h-39.9zM460.28 275.28h39.9v1h-39.9zM501.96 275.28h39.9v1h-39.9zM543.64 275.28h39.9v1h-39.9zM585.32 275.28h39.9v1h-39.9zM627.00 275.28h39.9v1h-39.9zM668.68 275.28h39.9v1h-39.9zM710.36 275.28h39.9v1h-39.9zM752.04 275.28h39.9v1h-39.9zM793.72 275.28h39.9v1h-39.9zM835.40 275.28h39.9v1h-39.9zM210.20 291.05h39.9v1h-39.9zM251.88 291.05h39.9v1h-39.9zM293.56 291.05h39.9v1h-39.9zM335.24 291.05h39.9v1h-39.9zM376.92 291.05h39.9v1h-39.9zM418.60 291.05h39.9v1h-39.9zM460.28 291.05h39.9v1h-39.9zM501.96 291.05h39.9v1h-39.9zM543.64 291.05h39.9v1h-39.9zM585.32 291.05h39.9v1h-39.9zM627.00 291.05h39.9v1h-39.9zM668.68 291.05h39.9v1h-39.9zM710.36 291.05h39.9v1h-39.9zM752.04 291.05h39.9v1h-39.9zM793.72 291.05h39.9v1h-39.9zM835.40 291.05h39.9v1h-39.9zM210.20 306.81h39.9v1h-39.9zM251.88 306.81h39.9v1h-39.9zM293.56 306.81h39.9v1h-39.9zM335.24 306.81h39.9v1h-39.9zM376.92 306.81h39.9v1h-39.9zM418.60 306.81h39.9v1h-39.9zM460.28 306.81h39.9v1h-39.9zM501.96 306.81h39.9v1h-39.9zM543.64 306.81h39.9v1h-39.9zM585.32 306.81h39.9v1h-39.9zM627.00 306.81h39.9v1h-39.9zM668.68 306.81h39.9v1h-39.9zM710.36 306.81h39.9v1h-39.9zM752.04 306.81h39.9v1h-39.9zM793.72 306.81h39.9v1h-39.9zM835.40 306.81h39.9v1h-39.9zM210.20 322.57h39.9v1h-39.9zM251.88 322.57h39.9v1h-39.9zM293.56 322.57h39.9v1h-39.9zM335.24 322.57h39.9v1h-39.9zM376.92 322.57h39.9v1h-39.9zM418.60 322.57h39.9v1h-39.9zM460.28 322.57h39.9v1h-39.9zM501.96 322.57h39.9v1h-39.9zM543.64 322.57h39.9v1h-39.9zM585.32 322.57h39.9v1h-39.9zM627.00 322.57h39.9v1h-39.9zM668.68 322.57h39.9v1h-39.9zM710.36 322.57h39.9v1h-39.9zM752.04 322.57h39.9v1h-39.9zM793.72 322.57h39.9v1h-39.9zM835.40 322.57h39.9v1h-39.9zM210.20 338.34h39.9v1h-39.9zM251.88 338.34h39.9v1h-39.9zM293.56 338.34h39.9v1h-39.9zM335.24 338.34h39.9v1h-39.9zM376.92 338.34h39.9v1h-39.9zM418.60 338.34h39.9v1h-39.9zM460.28 338.34h39.9v1h-39.9zM501.96 338.34h39.9v1h-39.9zM543.64 338.34h39.9v1h-39.9zM585.32 338.34h39.9v1h-39.9zM627.00 338.34h39.9v1h-39.9zM668.68 338.34h39.9v1h-39.9zM710.36 338.34h39.9v1h-39.9zM752.04 338.34h39.9v1h-39.9zM793.72 338.34h39.9v1h-39.9zM835.40 338.34h39.9v1h-39.9zM210.20 354.11h39.9v1h-39.9zM251.88 354.11h39.9v1h-39.9zM293.56 354.11h39.9v1h-39.9zM335.24 354.11h39.9v1h-39.9zM376.92 354.11h39.9v1h-39.9zM418.60 354.11h39.9v1h-39.9zM460.28 354.11h39.9v1h-39.9zM501.96 354.11h39.9v1h-39.9zM543.64 354.11h39.9v1h-39.9zM585.32 354.11h39.9v1h-39.9zM627.00 354.11h39.9v1h-39.9zM668.68 354.11h39.9v1h-39.9zM710.36 354.11h39.9v1h-39.9zM752.04 354.11h39.9v1h-39.9zM793.72 354.11h39.9v1h-39.9zM835.40 354.11h39.9v1h-39.9zM210.20 369.87h39.9v1h-39.9zM251.88 369.87h39.9v1h-39.9zM293.56 369.87h39.9v1h-39.9zM335.24 369.87h39.9v1h-39.9zM376.92 369.87h39.9v1h-39.9zM418.60 369.87h39.9v1h-39.9zM460.28 369.87h39.9v1h-39.9zM501.96 369.87h39.9v1h-39.9zM543.64 369.87h39.9v1h-39.9zM585.32 369.87h39.9v1h-39.9zM627.00 369.87h39.9v1h-39.9zM668.68 369.87h39.9v1h-39.9zM710.36 369.87h39.9v1h-39.9zM752.04 369.87h39.9v1h-39.9zM793.72 369.87h39.9v1h-39.9zM835.40 369.87h39.9v1h-39.9zM210.20 385.63h39.9v1h-39.9zM251.88 385.63h39.9v1h-39.9zM293.56 385.63h39.9v1h-39.9zM335.24 385.63h39.9v1h-39.9zM376.92 385.63h39.9v1h-39.9zM418.60 385.63h39.9v1h-39.9zM460.28 385.63h39.9v1h-39.9zM501.96 385.63h39.9v1h-39.9zM543.64 385.63h39.9v1h-39.9zM585.32 385.63h39.9v1h-39.9zM627.00 385.63h39.9v1h-39.9zM668.68 385.63h39.9v1h-39.9zM710.36 385.63h39.9v1h-39.9zM752.04 385.63h39.9v1h-39.9zM793.72 385.63h39.9v1h-39.9zM835.40 385.63h39.9v1h-39.9zM210.20 401.40h39.9v1h-39.9zM251.88 401.40h39.9v1h-39.9zM293.56 401.40h39.9v1h-39.9zM335.24 401.40h39.9v1h-39.9zM376.92 401.40h39.9v1h-39.9zM418.60 401.40h39.9v1h-39.9zM460.28 401.40h39.9v1h-39.9zM501.96 401.40h39.9v1h-39.9zM543.64 401.40h39.9v1h-39.9zM585.32 401.40h39.9v1h-39.9zM627.00 401.40h39.9v1h-39.9zM668.68 401.40h39.9v1h-39.9zM710.36 401.40h39.9v1h-39.9zM752.04 401.40h39.9v1h-39.9zM793.72 401.40h39.9v1h-39.9zM835.40 401.40h39.9v1h-39.9zM210.20 417.17h39.9v1h-39.9zM251.88 417.17h39.9v1h-39.9zM293.56 417.17h39.9v1h-39.9zM335.24 417.17h39.9v1h-39.9zM376.92 417.17h39.9v1h-39.9zM418.60 417.17h39.9v1h-39.9zM460.28 417.17h39.9v1h-39.9zM501.96 417.17h39.9v1h-39.9zM543.64 417.17h39.9v1h-39.9zM585.32 417.17h39.9v1h-39.9zM627.00 417.17h39.9v1h-39.9zM668.68 417.17h39.9v1h-39.9zM710.36 417.17h39.9v1h-39.9zM752.04 417.17h39.9v1h-39.9zM793.72 417.17h39.9v1h-39.9zM835.40 417.17h39.9v1h-39.9zM210.20 432.93h39.9v1h-39.9zM251.88 432.93h39.9v1h-39.9zM293.56 432.93h39.9v1h-39.9zM335.24 432.93h39.9v1h-39.9zM376.92 432.93h39.9v1h-39.9zM418.60 432.93h39.9v1h-39.9zM460.28 432.93h39.9v1h-39.9zM501.96 432.93h39.9v1h-39.9zM543.64 432.93h39.9v1h-39.9zM585.32 432.93h39.9v1h-39.9zM627.00 432.93h39.9v1h-39.9zM668.68 432.93h39.9v1h-39.9zM710.36 432.93h39.9v1h-39.9zM752.04 432.93h39.9v1h-39.9zM793.72 432.93h39.9v1h-39.9zM835.40 432.93h39.9v1h-39.9zM210.20 448.69h39.9v1h-39.9zM251.88 448.69h39.9v1h-39.9zM293.56 448.69h39.9v1h-39.9zM335.24 448.69h39.9v1h-39.9zM376.92 448.69h39.9v1h-39.9zM418.60 448.69h39.9v1h-39.9zM460.28 448.69h39.9v1h-39.9zM501.96 448.69h39.9v1h-39.9zM543.64 448.69h39.9v1h-39.9zM585.32 448.69h39.9v1h-39.9zM627.00 448.69h39.9v1h-39.9zM668.68 448.69h39.9v1h-39.9zM710.36 448.69h39.9v1h-39.9zM752.04 448.69h39.9v1h-39.9zM793.72 448.69h39.9v1h-39.9zM835.40 448.69h39.9v1h-39.9zM210.20 464.46h39.9v1h-39.9zM251.88 464.46h39.9v1h-39.9zM293.56 464.46h39.9v1h-39.9zM335.24 464.46h39.9v1h-39.9zM376.92 464.46h39.9v1h-39.9zM418.60 464.46h39.9v1h-39.9zM460.28 464.46h39.9v1h-39.9zM501.96 464.46h39.9v1h-39.9zM543.64 464.46h39.9v1h-39.9zM585.32 464.46h39.9v1h-39.9zM627.00 464.46h39.9v1h-39.9zM668.68 464.46h39.9v1h-39.9zM710.36 464.46h39.9v1h-39.9zM752.04 464.46h39.9v1h-39.9zM793.72 464.46h39.9v1h-39.9zM835.40 464.46h39.9v1h-39.9zM210.20 480.23h39.9v1h-39.9zM251.88 480.23h39.9v1h-39.9zM293.56 480.23h39.9v1h-39.9zM335.24 480.23h39.9v1h-39.9zM376.92 480.23h39.9v1h-39.9zM418.60 480.23h39.9v1h-39.9zM460.28 480.23h39.9v1h-39.9zM501.96 480.23h39.9v1h-39.9zM543.64 480.23h39.9v1h-39.9zM585.32 480.23h39.9v1h-39.9zM627.00 480.23h39.9v1h-39.9zM668.68 480.23h39.9v1h-39.9zM710.36 480.23h39.9v1h-39.9zM752.04 480.23h39.9v1h-39.9zM793.72 480.23h39.9v1h-39.9zM835.40 480.23h39.9v1h-39.9z"/><path fill="#acb2b6" d="M210.20 243.75h1v12.8h-1zM251.88 243.75h1v12.8h-1zM293.56 243.75h1v12.8h-1zM335.24 243.75h1v12.8h-1zM376.92 243.75h1v12.8h-1zM418.60 243.75h1v12.8h-1zM460.28 243.75h1v12.8h-1zM501.96 243.75h1v12.8h-1zM543.64 243.75h1v12.8h-1zM585.32 243.75h1v12.8h-1zM627.00 243.75h1v12.8h-1zM668.68 243.75h1v12.8h-1zM710.36 243.75h1v12.8h-1zM752.04 243.75h1v12.8h-1zM793.72 243.75h1v12.8h-1zM835.40 243.75h1v12.8h-1zM210.20 259.51h1v12.8h-1zM251.88 259.51h1v12.8h-1zM293.56 259.51h1v12.8h-1zM335.24 259.51h1v12.8h-1zM376.92 259.51h1v12.8h-1zM418.60 259.51h1v12.8h-1zM460.28 259.51h1v12.8h-1zM501.96 259.51h1v12.8h-1zM543.64 259.51h1v12.8h-1zM585.32 259.51h1v12.8h-1zM627.00 259.51h1v12.8h-1zM668.68 259.51h1v12.8h-1zM710.36 259.51h1v12.8h-1zM752.04 259.51h1v12.8h-1zM793.72 259.51h1v12.8h-1zM835.40 259.51h1v12.8h-1zM210.20 275.28h1v12.8h-1zM251.88 275.28h1v12.8h-1zM293.56 275.28h1v12.8h-1zM335.24 275.28h1v12.8h-1zM376.92 275.28h1v12.8h-1zM418.60 275.28h1v12.8h-1zM460.28 275.28h1v12.8h-1zM501.96 275.28h1v12.8h-1zM543.64 275.28h1v12.8h-1zM585.32 275.28h1v12.8h-1zM627.00 275.28h1v12.8h-1zM668.68 275.28h1v12.8h-1zM710.36 275.28h1v12.8h-1zM752.04 275.28h1v12.8h-1zM793.72 275.28h1v12.8h-1zM835.40 275.28h1v12.8h-1zM210.20 291.05h1v12.8h-1zM251.88 291.05h1v12.8h-1zM293.56 291.05h1v12.8h-1zM335.24 291.05h1v12.8h-1zM376.92 291.05h1v12.8h-1zM418.60 291.05h1v12.8h-1zM460.28 291.05h1v12.8h-1zM501.96 291.05h1v12.8h-1zM543.64 291.05h1v12.8h-1zM585.32 291.05h1v12.8h-1zM627.00 291.05h1v12.8h-1zM668.68 291.05h1v12.8h-1zM710.36 291.05h1v12.8h-1zM752.04 291.05h1v12.8h-1zM793.72 291.05h1v12.8h-1zM835.40 291.05h1v12.8h-1zM210.20 306.81h1v12.8h-1zM251.88 306.81h1v12.8h-1zM293.56 306.81h1v12.8h-1zM335.24 306.81h1v12.8h-1zM376.92 306.81h1v12.8h-1zM418.60 306.81h1v12.8h-1zM460.28 306.81h1v12.8h-1zM501.96 306.81h1v12.8h-1zM543.64 306.81h1v12.8h-1zM585.32 306.81h1v12.8h-1zM627.00 306.81h1v12.8h-1zM668.68 306.81h1v12.8h-1zM710.36 306.81h1v12.8h-1zM752.04 306.81h1v12.8h-1zM793.72 306.81h1v12.8h-1zM835.40 306.81h1v12.8h-1zM210.20 322.57h1v12.8h-1zM251.88 322.57h1v12.8h-1zM293.56 322.57h1v12.8h-1zM335.24 322.57h1v12.8h-1zM376.92 322.57h1v12.8h-1zM418.60 322.57h1v12.8h-1zM460.28 322.57h1v12.8h-1zM501.96 322.57h1v12.8h-1zM543.64 322.57h1v12.8h-1zM585.32 322.57h1v12.8h-1zM627.00 322.57h1v12.8h-1zM668.68 322.57h1v12.8h-1zM710.36 322.57h1v12.8h-1zM752.04 322.57h1v12.8h-1zM793.72 322.57h1v12.8h-1zM835.40 322.57h1v12.8h-1zM210.20 338.34h1v12.8h-1zM251.88 338.34h1v12.8h-1zM293.56 338.34h1v12.8h-1zM335.24 338.34h1v12.8h-1zM376.92 338.34h1v12.8h-1zM418.60 338.34h1v12.8h-1zM460.28 338.34h1v12.8h-1zM501.96 338.34h1v12.8h-1zM543.64 338.34h1v12.8h-1zM585.32 338.34h1v12.8h-1zM627.00 338.34h1v12.8h-1zM668.68 338.34h1v12.8h-1zM710.36 338.34h1v12.8h-1zM752.04 338.34h1v12.8h-1zM793.72 338.34h1v12.8h-1zM835.40 338.34h1v12.8h-1zM210.20 354.11h1v12.8h-1zM251.88 354.11h1v12.8h-1zM293.56 354.11h1v12.8h-1zM335.24 354.11h1v12.8h-1zM376.92 354.11h1v12.8h-1zM418.60 354.11h1v12.8h-1zM460.28 354.11h1v12.8h-1zM501.96 354.11h1v12.8h-1zM543.64 354.11h1v12.8h-1zM585.32 354.11h1v12.8h-1zM627.00 354.11h1v12.8h-1zM668.68 354.11h1v12.8h-1zM710.36 354.11h1v12.8h-1zM752.04 354.11h1v12.8h-1zM793.72 354.11h1v12.8h-1zM835.40 354.11h1v12.8h-1zM210.20 369.87h1v12.8h-1zM251.88 369.87h1v12.8h-1zM293.56 369.87h1v12.8h-1zM335.24 369.87h1v12.8h-1zM376.92 369.87h1v12.8h-1zM418.60 369.87h1v12.8h-1zM460.28 369.87h1v12.8h-1zM501.96 369.87h1v12.8h-1zM543.64 369.87h1v12.8h-1zM585.32 369.87h1v12.8h-1zM627.00 369.87h1v12.8h-1zM668.68 369.87h1v12.8h-1zM710.36 369.87h1v12.8h-1zM752.04 369.87h1v12.8h-1zM793.72 369.87h1v12.8h-1zM835.40 369.87h1v12.8h-1zM210.20 385.63h1v12.8h-1zM251.88 385.63h1v12.8h-1zM293.56 385.63h1v12.8h-1zM335.24 385.63h1v12.8h-1zM376.92 385.63h1v12.8h-1zM418.60 385.63h1v12.8h-1zM460.28 385.63h1v12.8h-1zM501.96 385.63h1v12.8h-1zM543.64 385.63h1v12.8h-1zM585.32 385.63h1v12.8h-1zM627.00 385.63h1v12.8h-1zM668.68 385.63h1v12.8h-1zM710.36 385.63h1v12.8h-1zM752.04 385.63h1v12.8h-1zM793.72 385.63h1v12.8h-1zM835.40 385.63h1v12.8h-1zM210.20 401.40h1v12.8h-1zM251.88 401.40h1v12.8h-1zM293.56 401.40h1v12.8h-1zM335.24 401.40h1v12.8h-1zM376.92 401.40h1v12.8h-1zM418.60 401.40h1v12.8h-1zM460.28 401.40h1v12.8h-1zM501.96 401.40h1v12.8h-1zM543.64 401.40h1v12.8h-1zM585.32 401.40h1v12.8h-1zM627.00 401.40h1v12.8h-1zM668.68 401.40h1v12.8h-1zM710.36 401.40h1v12.8h-1zM752.04 401.40h1v12.8h-1zM793.72 401.40h1v12.8h-1zM835.40 401.40h1v12.8h-1zM210.20 417.17h1v12.8h-1zM251.88 417.17h1v12.8h-1zM293.56 417.17h1v12.8h-1zM335.24 417.17h1v12.8h-1zM376.92 417.17h1v12.8h-1zM418.60 417.17h1v12.8h-1zM460.28 417.17h1v12.8h-1zM501.96 417.17h1v12.8h-1zM543.64 417.17h1v12.8h-1zM585.32 417.17h1v12.8h-1zM627.00 417.17h1v12.8h-1zM668.68 417.17h1v12.8h-1zM710.36 417.17h1v12.8h-1zM752.04 417.17h1v12.8h-1zM793.72 417.17h1v12.8h-1zM835.40 417.17h1v12.8h-1zM210.20 432.93h1v12.8h-1zM251.88 432.93h1v12.8h-1zM293.56 432.93h1v12.8h-1zM335.24 432.93h1v12.8h-1zM376.92 432.93h1v12.8h-1zM418.60 432.93h1v12.8h-1zM460.28 432.93h1v12.8h-1zM501.96 432.93h1v12.8h-1zM543.64 432.93h1v12.8h-1zM585.32 432.93h1v12.8h-1zM627.00 432.93h1v12.8h-1zM668.68 432.93h1v12.8h-1zM710.36 432.93h1v12.8h-1zM752.04 432.93h1v12.8h-1zM793.72 432.93h1v12.8h-1zM835.40 432.93h1v12.8h-1zM210.20 448.69h1v12.8h-1zM251.88 448.69h1v12.8h-1zM293.56 448.69h1v12.8h-1zM335.24 448.69h1v12.8h-1zM376.92 448.69h1v12.8h-1zM418.60 448.69h1v12.8h-1zM460.28 448.69h1v12.8h-1zM501.96 448.69h1v12.8h-1zM543.64 448.69h1v12.8h-1zM585.32 448.69h1v12.8h-1zM627.00 448.69h1v12.8h-1zM668.68 448.69h1v12.8h-1zM710.36 448.69h1v12.8h-1zM752.04 448.69h1v12.8h-1zM793.72 448.69h1v12.8h-1zM835.40 448.69h1v12.8h-1zM210.20 464.46h1v12.8h-1zM251.88 464.46h1v12.8h-1zM293.56 464.46h1v12.8h-1zM335.24 464.46h1v12.8h-1zM376.92 464.46h1v12.8h-1zM418.60 464.46h1v12.8h-1zM460.28 464.46h1v12.8h-1zM501.96 464.46h1v12.8h-1zM543.64 464.46h1v12.8h-1zM585.32 464.46h1v12.8h-1zM627.00 464.46h1v12.8h-1zM668.68 464.46h1v12.8h-1zM710.36 464.46h1v12.8h-1zM752.04 464.46h1v12.8h-1zM793.72 464.46h1v12.8h-1zM835.40 464.46h1v12.8h-1zM210.20 480.23h1v12.8h-1zM251.88 480.23h1v12.8h-1zM293.56 480.23h1v12.8h-1zM335.24 480.23h1v12.8h-1zM376.92 480.23h1v12.8h-1zM418.60 480.23h1v12.8h-1zM460.28 480.23h1v12.8h-1zM501.96 480.23h1v12.8h-1zM543.64 480.23h1v12.8h-1zM585.32 480.23h1v12.8h-1zM627.00 480.23h1v12.8h-1zM668.68 480.23h1v12.8h-1zM710.36 480.23h1v12.8h-1zM752.04 480.23h1v12.8h-1zM793.72 480.23h1v12.8h-1zM835.40 480.23h1v12.8h-1z"/><path fill="#c9c8c2" d="M212.50 245.45h35.4v5.7h-35.4zM254.18 245.45h35.4v5.7h-35.4zM295.86 245.45h35.4v5.7h-35.4zM337.54 245.45h35.4v5.7h-35.4zM379.22 245.45h35.4v5.7h-35.4zM420.90 245.45h35.4v5.7h-35.4zM462.58 245.45h35.4v5.7h-35.4zM504.26 245.45h35.4v5.7h-35.4zM545.94 245.45h35.4v5.7h-35.4zM587.62 245.45h35.4v5.7h-35.4zM629.30 245.45h35.4v5.7h-35.4zM670.98 245.45h35.4v5.7h-35.4zM712.66 245.45h35.4v5.7h-35.4zM754.34 245.45h35.4v5.7h-35.4zM796.02 245.45h35.4v5.7h-35.4zM837.70 245.45h35.4v5.7h-35.4zM212.50 261.21h35.4v5.7h-35.4zM254.18 261.21h35.4v5.7h-35.4zM295.86 261.21h35.4v5.7h-35.4zM337.54 261.21h35.4v5.7h-35.4zM379.22 261.21h35.4v5.7h-35.4zM420.90 261.21h35.4v5.7h-35.4zM462.58 261.21h35.4v5.7h-35.4zM504.26 261.21h35.4v5.7h-35.4zM545.94 261.21h35.4v5.7h-35.4zM587.62 261.21h35.4v5.7h-35.4zM629.30 261.21h35.4v5.7h-35.4zM670.98 261.21h35.4v5.7h-35.4zM712.66 261.21h35.4v5.7h-35.4zM754.34 261.21h35.4v5.7h-35.4zM796.02 261.21h35.4v5.7h-35.4zM837.70 261.21h35.4v5.7h-35.4zM212.50 276.98h35.4v5.7h-35.4zM254.18 276.98h35.4v5.7h-35.4zM295.86 276.98h35.4v5.7h-35.4zM337.54 276.98h35.4v5.7h-35.4zM379.22 276.98h35.4v5.7h-35.4zM420.90 276.98h35.4v5.7h-35.4zM462.58 276.98h35.4v5.7h-35.4zM504.26 276.98h35.4v5.7h-35.4zM545.94 276.98h35.4v5.7h-35.4zM587.62 276.98h35.4v5.7h-35.4zM629.30 276.98h35.4v5.7h-35.4zM670.98 276.98h35.4v5.7h-35.4zM712.66 276.98h35.4v5.7h-35.4zM754.34 276.98h35.4v5.7h-35.4zM796.02 276.98h35.4v5.7h-35.4zM837.70 276.98h35.4v5.7h-35.4zM212.50 292.75h35.4v5.7h-35.4zM254.18 292.75h35.4v5.7h-35.4zM295.86 292.75h35.4v5.7h-35.4zM337.54 292.75h35.4v5.7h-35.4zM379.22 292.75h35.4v5.7h-35.4zM420.90 292.75h35.4v5.7h-35.4zM462.58 292.75h35.4v5.7h-35.4zM504.26 292.75h35.4v5.7h-35.4zM545.94 292.75h35.4v5.7h-35.4zM587.62 292.75h35.4v5.7h-35.4zM629.30 292.75h35.4v5.7h-35.4zM670.98 292.75h35.4v5.7h-35.4zM712.66 292.75h35.4v5.7h-35.4zM754.34 292.75h35.4v5.7h-35.4zM796.02 292.75h35.4v5.7h-35.4zM837.70 292.75h35.4v5.7h-35.4zM212.50 308.51h35.4v5.7h-35.4zM254.18 308.51h35.4v5.7h-35.4zM295.86 308.51h35.4v5.7h-35.4zM337.54 308.51h35.4v5.7h-35.4zM379.22 308.51h35.4v5.7h-35.4zM420.90 308.51h35.4v5.7h-35.4zM462.58 308.51h35.4v5.7h-35.4zM504.26 308.51h35.4v5.7h-35.4zM545.94 308.51h35.4v5.7h-35.4zM587.62 308.51h35.4v5.7h-35.4zM629.30 308.51h35.4v5.7h-35.4zM670.98 308.51h35.4v5.7h-35.4zM712.66 308.51h35.4v5.7h-35.4zM754.34 308.51h35.4v5.7h-35.4zM796.02 308.51h35.4v5.7h-35.4zM837.70 308.51h35.4v5.7h-35.4zM212.50 324.27h35.4v5.7h-35.4zM254.18 324.27h35.4v5.7h-35.4zM295.86 324.27h35.4v5.7h-35.4zM337.54 324.27h35.4v5.7h-35.4zM379.22 324.27h35.4v5.7h-35.4zM420.90 324.27h35.4v5.7h-35.4zM462.58 324.27h35.4v5.7h-35.4zM504.26 324.27h35.4v5.7h-35.4zM545.94 324.27h35.4v5.7h-35.4zM587.62 324.27h35.4v5.7h-35.4zM629.30 324.27h35.4v5.7h-35.4zM670.98 324.27h35.4v5.7h-35.4zM712.66 324.27h35.4v5.7h-35.4zM754.34 324.27h35.4v5.7h-35.4zM796.02 324.27h35.4v5.7h-35.4zM837.70 324.27h35.4v5.7h-35.4zM212.50 340.04h35.4v5.7h-35.4zM254.18 340.04h35.4v5.7h-35.4zM295.86 340.04h35.4v5.7h-35.4zM337.54 340.04h35.4v5.7h-35.4zM379.22 340.04h35.4v5.7h-35.4zM420.90 340.04h35.4v5.7h-35.4zM462.58 340.04h35.4v5.7h-35.4zM504.26 340.04h35.4v5.7h-35.4zM545.94 340.04h35.4v5.7h-35.4zM587.62 340.04h35.4v5.7h-35.4zM629.30 340.04h35.4v5.7h-35.4zM670.98 340.04h35.4v5.7h-35.4zM712.66 340.04h35.4v5.7h-35.4zM754.34 340.04h35.4v5.7h-35.4zM796.02 340.04h35.4v5.7h-35.4zM837.70 340.04h35.4v5.7h-35.4zM212.50 355.81h35.4v5.7h-35.4zM254.18 355.81h35.4v5.7h-35.4zM295.86 355.81h35.4v5.7h-35.4zM337.54 355.81h35.4v5.7h-35.4zM379.22 355.81h35.4v5.7h-35.4zM420.90 355.81h35.4v5.7h-35.4zM462.58 355.81h35.4v5.7h-35.4zM504.26 355.81h35.4v5.7h-35.4zM545.94 355.81h35.4v5.7h-35.4zM587.62 355.81h35.4v5.7h-35.4zM629.30 355.81h35.4v5.7h-35.4zM670.98 355.81h35.4v5.7h-35.4zM712.66 355.81h35.4v5.7h-35.4zM754.34 355.81h35.4v5.7h-35.4zM796.02 355.81h35.4v5.7h-35.4zM837.70 355.81h35.4v5.7h-35.4zM212.50 371.57h35.4v5.7h-35.4zM254.18 371.57h35.4v5.7h-35.4zM295.86 371.57h35.4v5.7h-35.4zM337.54 371.57h35.4v5.7h-35.4zM379.22 371.57h35.4v5.7h-35.4zM420.90 371.57h35.4v5.7h-35.4zM462.58 371.57h35.4v5.7h-35.4zM504.26 371.57h35.4v5.7h-35.4zM545.94 371.57h35.4v5.7h-35.4zM587.62 371.57h35.4v5.7h-35.4zM629.30 371.57h35.4v5.7h-35.4zM670.98 371.57h35.4v5.7h-35.4zM712.66 371.57h35.4v5.7h-35.4zM754.34 371.57h35.4v5.7h-35.4zM796.02 371.57h35.4v5.7h-35.4zM837.70 371.57h35.4v5.7h-35.4zM212.50 387.33h35.4v5.7h-35.4zM254.18 387.33h35.4v5.7h-35.4zM295.86 387.33h35.4v5.7h-35.4zM337.54 387.33h35.4v5.7h-35.4zM379.22 387.33h35.4v5.7h-35.4zM420.90 387.33h35.4v5.7h-35.4zM462.58 387.33h35.4v5.7h-35.4zM504.26 387.33h35.4v5.7h-35.4zM545.94 387.33h35.4v5.7h-35.4zM587.62 387.33h35.4v5.7h-35.4zM629.30 387.33h35.4v5.7h-35.4zM670.98 387.33h35.4v5.7h-35.4zM712.66 387.33h35.4v5.7h-35.4zM754.34 387.33h35.4v5.7h-35.4zM796.02 387.33h35.4v5.7h-35.4zM837.70 387.33h35.4v5.7h-35.4zM212.50 403.10h35.4v5.7h-35.4zM254.18 403.10h35.4v5.7h-35.4zM295.86 403.10h35.4v5.7h-35.4zM337.54 403.10h35.4v5.7h-35.4zM379.22 403.10h35.4v5.7h-35.4zM420.90 403.10h35.4v5.7h-35.4zM462.58 403.10h35.4v5.7h-35.4zM504.26 403.10h35.4v5.7h-35.4zM545.94 403.10h35.4v5.7h-35.4zM587.62 403.10h35.4v5.7h-35.4zM629.30 403.10h35.4v5.7h-35.4zM670.98 403.10h35.4v5.7h-35.4zM712.66 403.10h35.4v5.7h-35.4zM754.34 403.10h35.4v5.7h-35.4zM796.02 403.10h35.4v5.7h-35.4zM837.70 403.10h35.4v5.7h-35.4zM212.50 418.87h35.4v5.7h-35.4zM254.18 418.87h35.4v5.7h-35.4zM295.86 418.87h35.4v5.7h-35.4zM337.54 418.87h35.4v5.7h-35.4zM379.22 418.87h35.4v5.7h-35.4zM420.90 418.87h35.4v5.7h-35.4zM462.58 418.87h35.4v5.7h-35.4zM504.26 418.87h35.4v5.7h-35.4zM545.94 418.87h35.4v5.7h-35.4zM587.62 418.87h35.4v5.7h-35.4zM629.30 418.87h35.4v5.7h-35.4zM670.98 418.87h35.4v5.7h-35.4zM712.66 418.87h35.4v5.7h-35.4zM754.34 418.87h35.4v5.7h-35.4zM796.02 418.87h35.4v5.7h-35.4zM837.70 418.87h35.4v5.7h-35.4zM212.50 434.63h35.4v5.7h-35.4zM254.18 434.63h35.4v5.7h-35.4zM295.86 434.63h35.4v5.7h-35.4zM337.54 434.63h35.4v5.7h-35.4zM379.22 434.63h35.4v5.7h-35.4zM420.90 434.63h35.4v5.7h-35.4zM462.58 434.63h35.4v5.7h-35.4zM504.26 434.63h35.4v5.7h-35.4zM545.94 434.63h35.4v5.7h-35.4zM587.62 434.63h35.4v5.7h-35.4zM629.30 434.63h35.4v5.7h-35.4zM670.98 434.63h35.4v5.7h-35.4zM712.66 434.63h35.4v5.7h-35.4zM754.34 434.63h35.4v5.7h-35.4zM796.02 434.63h35.4v5.7h-35.4zM837.70 434.63h35.4v5.7h-35.4zM212.50 450.39h35.4v5.7h-35.4zM254.18 450.39h35.4v5.7h-35.4zM295.86 450.39h35.4v5.7h-35.4zM337.54 450.39h35.4v5.7h-35.4zM379.22 450.39h35.4v5.7h-35.4zM420.90 450.39h35.4v5.7h-35.4zM462.58 450.39h35.4v5.7h-35.4zM504.26 450.39h35.4v5.7h-35.4zM545.94 450.39h35.4v5.7h-35.4zM587.62 450.39h35.4v5.7h-35.4zM629.30 450.39h35.4v5.7h-35.4zM670.98 450.39h35.4v5.7h-35.4zM712.66 450.39h35.4v5.7h-35.4zM754.34 450.39h35.4v5.7h-35.4zM796.02 450.39h35.4v5.7h-35.4zM837.70 450.39h35.4v5.7h-35.4zM212.50 466.16h35.4v5.7h-35.4zM254.18 466.16h35.4v5.7h-35.4zM295.86 466.16h35.4v5.7h-35.4zM337.54 466.16h35.4v5.7h-35.4zM379.22 466.16h35.4v5.7h-35.4zM420.90 466.16h35.4v5.7h-35.4zM462.58 466.16h35.4v5.7h-35.4zM504.26 466.16h35.4v5.7h-35.4zM545.94 466.16h35.4v5.7h-35.4zM587.62 466.16h35.4v5.7h-35.4zM629.30 466.16h35.4v5.7h-35.4zM670.98 466.16h35.4v5.7h-35.4zM712.66 466.16h35.4v5.7h-35.4zM754.34 466.16h35.4v5.7h-35.4zM796.02 466.16h35.4v5.7h-35.4zM837.70 466.16h35.4v5.7h-35.4zM212.50 481.93h35.4v5.7h-35.4zM254.18 481.93h35.4v5.7h-35.4zM295.86 481.93h35.4v5.7h-35.4zM337.54 481.93h35.4v5.7h-35.4zM379.22 481.93h35.4v5.7h-35.4zM420.90 481.93h35.4v5.7h-35.4zM462.58 481.93h35.4v5.7h-35.4zM504.26 481.93h35.4v5.7h-35.4zM545.94 481.93h35.4v5.7h-35.4zM587.62 481.93h35.4v5.7h-35.4zM629.30 481.93h35.4v5.7h-35.4zM670.98 481.93h35.4v5.7h-35.4zM712.66 481.93h35.4v5.7h-35.4zM754.34 481.93h35.4v5.7h-35.4zM796.02 481.93h35.4v5.7h-35.4zM837.70 481.93h35.4v5.7h-35.4z"/><text x="230.30" y="250.60">ZONE1</text><text x="271.98" y="250.60">ZONE2</text><text x="313.66" y="250.60">ZONE3</text><text x="355.34" y="250.60">ZONE4</text><text x="397.02" y="250.60">ZONE5</text><text x="438.70" y="250.60">ZONE6</text><text x="480.38" y="250.60">ZONE7</text><text x="522.06" y="250.60">ZONE8</text><text x="563.74" y="250.60">ZONE9</text><text x="605.42" y="250.60">ZONE10</text><text x="647.10" y="250.60">ZONE11</text><text x="688.78" y="250.60">ZONE12</text><text x="730.46" y="250.60">ZONE13</text><text x="772.14" y="250.60">ZONE14</text><text x="813.82" y="250.60">ZONE15</text><text x="855.50" y="250.60">ZONE16</text><text x="230.30" y="266.37">ZONE17</text><text x="271.98" y="266.37">ZONE18</text><text x="313.66" y="266.37">ZONE19</text><text x="355.34" y="266.37">ZONE20</text><text x="397.02" y="266.37">ZONE21</text><text x="438.70" y="266.37">ZONE22</text><text x="480.38" y="266.37">ZONE23</text><text x="522.06" y="266.37">ZONE24</text><text x="563.74" y="266.37">ZONE25</text><text x="605.42" y="266.37">ZONE26</text><text x="647.10" y="266.37">ZONE27</text><text x="688.78" y="266.37">ZONE28</text><text x="730.46" y="266.37">ZONE29</text><text x="772.14" y="266.37">ZONE30</text><text x="813.82" y="266.37">ZONE31</text><text x="855.50" y="266.37">ZONE32</text><text x="230.30" y="282.13">ZONE33</text><text x="271.98" y="282.13">ZONE34</text><text x="313.66" y="282.13">ZONE35</text><text x="355.34" y="282.13">ZONE36</text><text x="397.02" y="282.13">ZONE37</text><text x="438.70" y="282.13">ZONE38</text><text x="480.38" y="282.13">ZONE39</text><text x="522.06" y="282.13">ZONE40</text><text x="563.74" y="282.13">ZONE41</text><text x="605.42" y="282.13">ZONE42</text><text x="647.10" y="282.13">ZONE43</text><text x="688.78" y="282.13">ZONE44</text><text x="730.46" y="282.13">ZONE45</text><text x="772.14" y="282.13">ZONE46</text><text x="813.82" y="282.13">ZONE47</text><text x="855.50" y="282.13">ZONE48</text><text x="230.30" y="297.90">ZONE49</text><text x="271.98" y="297.90">ZONE50</text><text x="313.66" y="297.90">ZONE51</text><text x="355.34" y="297.90">ZONE52</text><text x="397.02" y="297.90">ZONE53</text><text x="438.70" y="297.90">ZONE54</text><text x="480.38" y="297.90">ZONE55</text><text x="522.06" y="297.90">ZONE56</text><text x="563.74" y="297.90">ZONE57</text><text x="605.42" y="297.90">ZONE58</text><text x="647.10" y="297.90">ZONE59</text><text x="688.78" y="297.90">ZONE60</text><text x="730.46" y="297.90">ZONE61</text><text x="772.14" y="297.90">ZONE62</text><text x="813.82" y="297.90">ZONE63</text><text x="855.50" y="297.90">ZONE64</text><text x="230.30" y="313.66">ZONE65</text><text x="271.98" y="313.66">ZONE66</text><text x="313.66" y="313.66">ZONE67</text><text x="355.34" y="313.66">ZONE68</text><text x="397.02" y="313.66">ZONE69</text><text x="438.70" y="313.66">ZONE70</text><text x="480.38" y="313.66">ZONE71</text><text x="522.06" y="313.66">ZONE72</text><text x="563.74" y="313.66">ZONE73</text><text x="605.42" y="313.66">ZONE74</text><text x="647.10" y="313.66">ZONE75</text><text x="688.78" y="313.66">ZONE76</text><text x="730.46" y="313.66">ZONE77</text><text x="772.14" y="313.66">ZONE78</text><text x="813.82" y="313.66">ZONE79</text><text x="855.50" y="313.66">ZONE80</text><text x="230.30" y="329.43">ZONE81</text><text x="271.98" y="329.43">ZONE82</text><text x="313.66" y="329.43">ZONE83</text><text x="355.34" y="329.43">ZONE84</text><text x="397.02" y="329.43">ZONE85</text><text x="438.70" y="329.43">ZONE86</text><text x="480.38" y="329.43">ZONE87</text><text x="522.06" y="329.43">ZONE88</text><text x="563.74" y="329.43">ZONE89</text><text x="605.42" y="329.43">ZONE90</text><text x="647.10" y="329.43">ZONE91</text><text x="688.78" y="329.43">ZONE92</text><text x="730.46" y="329.43">ZONE93</text><text x="772.14" y="329.43">ZONE94</text><text x="813.82" y="329.43">ZONE95</text><text x="855.50" y="329.43">ZONE96</text><text x="230.30" y="345.19">ZONE97</text><text x="271.98" y="345.19">ZONE98</text><text x="313.66" y="345.19">ZONE99</text><text x="355.34" y="345.19">ZONE100</text><text x="397.02" y="345.19">ZONE101</text><text x="438.70" y="345.19">ZONE102</text><text x="480.38" y="345.19">ZONE103</text><text x="522.06" y="345.19">ZONE104</text><text x="563.74" y="345.19">ZONE105</text><text x="605.42" y="345.19">ZONE106</text><text x="647.10" y="345.19">ZONE107</text><text x="688.78" y="345.19">ZONE108</text><text x="730.46" y="345.19">ZONE109</text><text x="772.14" y="345.19">ZONE110</text><text x="813.82" y="345.19">ZONE111</text><text x="855.50" y="345.19">ZONE112</text><text x="230.30" y="360.96">ZONE113</text><text x="271.98" y="360.96">ZONE114</text><text x="313.66" y="360.96">ZONE115</text><text x="355.34" y="360.96">ZONE116</text><text x="397.02" y="360.96">ZONE117</text><text x="438.70" y="360.96">ZONE118</text><text x="480.38" y="360.96">ZONE119</text><text x="522.06" y="360.96">ZONE120</text><text x="563.74" y="360.96">ZONE121</text><text x="605.42" y="360.96">ZONE122</text><text x="647.10" y="360.96">ZONE123</text><text x="688.78" y="360.96">ZONE124</text><text x="730.46" y="360.96">ZONE125</text><text x="772.14" y="360.96">ZONE126</text><text x="813.82" y="360.96">ZONE127</text><text x="855.50" y="360.96">ZONE128</text><text x="230.30" y="376.72">ZONE129</text><text x="271.98" y="376.72">ZONE130</text><text x="313.66" y="376.72">ZONE131</text><text x="355.34" y="376.72">ZONE132</text><text x="397.02" y="376.72">ZONE133</text><text x="438.70" y="376.72">ZONE134</text><text x="480.38" y="376.72">ZONE135</text><text x="522.06" y="376.72">ZONE136</text><text x="563.74" y="376.72">ZONE137</text><text x="605.42" y="376.72">ZONE138</text><text x="647.10" y="376.72">ZONE139</text><text x="688.78" y="376.72">ZONE140</text><text x="730.46" y="376.72">ZONE141</text><text x="772.14" y="376.72">ZONE142</text><text x="813.82" y="376.72">ZONE143</text><text x="855.50" y="376.72">ZONE144</text><text x="230.30" y="392.49">ZONE145</text><text x="271.98" y="392.49">ZONE146</text><text x="313.66" y="392.49">ZONE147</text><text x="355.34" y="392.49">ZONE148</text><text x="397.02" y="392.49">ZONE149</text><text x="438.70" y="392.49">ZONE150</text><text x="480.38" y="392.49">ZONE151</text><text x="522.06" y="392.49">ZONE152</text><text x="563.74" y="392.49">ZONE153</text><text x="605.42" y="392.49">ZONE154</text><text x="647.10" y="392.49">ZONE155</text><text x="688.78" y="392.49">ZONE156</text><text x="730.46" y="392.49">ZONE157</text><text x="772.14" y="392.49">ZONE158</text><text x="813.82" y="392.49">ZONE159</text><text x="855.50" y="392.49">ZONE160</text><text x="230.30" y="408.25">ZONE161</text><text x="271.98" y="408.25">ZONE162</text><text x="313.66" y="408.25">ZONE163</text><text x="355.34" y="408.25">ZONE164</text><text x="397.02" y="408.25">ZONE165</text><text x="438.70" y="408.25">ZONE166</text><text x="480.38" y="408.25">ZONE167</text><text x="522.06" y="408.25">ZONE168</text><text x="563.74" y="408.25">ZONE169</text><text x="605.42" y="408.25">ZONE170</text><text x="647.10" y="408.25">ZONE171</text><text x="688.78" y="408.25">ZONE172</text><text x="730.46" y="408.25">ZONE173</text><text x="772.14" y="408.25">ZONE174</text><text x="813.82" y="408.25">ZONE175</text><text x="855.50" y="408.25">ZONE176</text><text x="230.30" y="424.02">ZONE177</text><text x="271.98" y="424.02">ZONE178</text><text x="313.66" y="424.02">ZONE179</text><text x="355.34" y="424.02">ZONE180</text><text x="397.02" y="424.02">ZONE181</text><text x="438.70" y="424.02">ZONE182</text><text x="480.38" y="424.02">ZONE183</text><text x="522.06" y="424.02">ZONE184</text><text x="563.74" y="424.02">ZONE185</text><text x="605.42" y="424.02">ZONE186</text><text x="647.10" y="424.02">ZONE187</text><text x="688.78" y="424.02">ZONE188</text><text x="730.46" y="424.02">ZONE189</text><text x="772.14" y="424.02">ZONE190</text><text x="813.82" y="424.02">ZONE191</text><text x="855.50" y="424.02">ZONE192</text><text x="230.30" y="439.78">ZONE193</text><text x="271.98" y="439.78">ZONE194</text><text x="313.66" y="439.78">ZONE195</text><text x="355.34" y="439.78">ZONE196</text><text x="397.02" y="439.78">ZONE197</text><text x="438.70" y="439.78">ZONE198</text><text x="480.38" y="439.78">ZONE199</text><text x="522.06" y="439.78">ZONE200</text><text x="563.74" y="439.78">ZONE201</text><text x="605.42" y="439.78">ZONE202</text><text x="647.10" y="439.78">ZONE203</text><text x="688.78" y="439.78">ZONE204</text><text x="730.46" y="439.78">ZONE205</text><text x="772.14" y="439.78">ZONE206</text><text x="813.82" y="439.78">ZONE207</text><text x="855.50" y="439.78">ZONE208</text><text x="230.30" y="455.55">ZONE209</text><text x="271.98" y="455.55">ZONE210</text><text x="313.66" y="455.55">ZONE211</text><text x="355.34" y="455.55">ZONE212</text><text x="397.02" y="455.55">ZONE213</text><text x="438.70" y="455.55">ZONE214</text><text x="480.38" y="455.55">ZONE215</text><text x="522.06" y="455.55">ZONE216</text><text x="563.74" y="455.55">ZONE217</text><text x="605.42" y="455.55">ZONE218</text><text x="647.10" y="455.55">ZONE219</text><text x="688.78" y="455.55">ZONE220</text><text x="730.46" y="455.55">ZONE221</text><text x="772.14" y="455.55">ZONE222</text><text x="813.82" y="455.55">ZONE223</text><text x="855.50" y="455.55">ZONE224</text><text x="230.30" y="471.31">ZONE225</text><text x="271.98" y="471.31">ZONE226</text><text x="313.66" y="471.31">ZONE227</text><text x="355.34" y="471.31">ZONE228</text><text x="397.02" y="471.31">ZONE229</text><text x="438.70" y="471.31">ZONE230</text><text x="480.38" y="471.31">ZONE231</text><text x="522.06" y="471.31">ZONE232</text><text x="563.74" y="471.31">ZONE233</text><text x="605.42" y="471.31">ZONE234</text><text x="647.10" y="471.31">ZONE235</text><text x="688.78" y="471.31">ZONE236</text><text x="730.46" y="471.31">ZONE237</text><text x="772.14" y="471.31">ZONE238</text><text x="813.82" y="471.31">ZONE239</text><text x="855.50" y="471.31">ZONE240</text><text x="230.30" y="487.08">ZONE241</text><text x="271.98" y="487.08">ZONE242</text><text x="313.66" y="487.08">ZONE243</text><text x="355.34" y="487.08">ZONE244</text><text x="397.02" y="487.08">ZONE245</text><text x="438.70" y="487.08">ZONE246</text><text x="480.38" y="487.08">ZONE247</text><text x="522.06" y="487.08">ZONE248</text><text x="563.74" y="487.08">ZONE249</text><text x="605.42" y="487.08">ZONE250</text><text x="647.10" y="487.08">ZONE251</text><text x="688.78" y="487.08">ZONE252</text><text x="730.46" y="487.08">ZONE253</text><text x="772.14" y="487.08">ZONE254</text><text x="813.82" y="487.08">ZONE255</text><text x="855.50" y="487.08">ZONE256</text></svg>
</body></html>
